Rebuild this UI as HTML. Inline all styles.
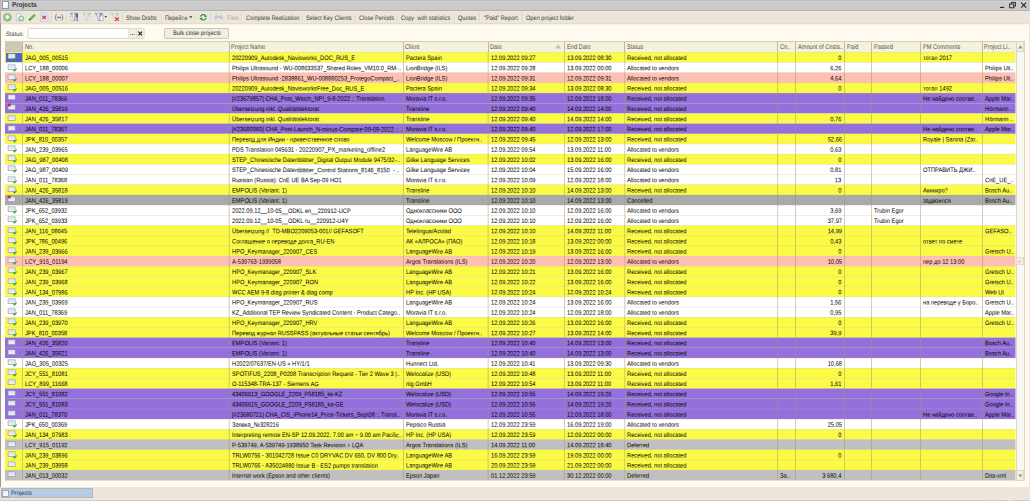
<!DOCTYPE html>
<html lang="en"><head><meta charset="utf-8"><title>Projects</title>
<style>
html,body{margin:0;padding:0;}
body{text-rendering:geometricPrecision;width:1030px;height:501px;overflow:hidden;background:#fffbf0;position:relative;font-family:"Liberation Sans",sans-serif;font-size:6.4px;color:#000;-webkit-text-stroke:0;}
.abs{position:absolute;}
svg{overflow:visible;}
.t{position:absolute;white-space:nowrap;line-height:1;transform:scaleX(.9) rotate(0.03deg);transform-origin:0 0;}
.row{position:absolute;left:5px;width:1010.5px;height:12px;}/*10.19*/
.c{position:absolute;top:0;height:100%;overflow:hidden;white-space:pre;}/*rgba(160,148,108,0.6)*/
.c span{position:absolute;left:2.9px;top:0;line-height:1;transform-origin:0 0;}
.c.r span{left:auto;right:2.6px;transform-origin:100% 0;}
/*rgba(190,180,150,0.4)*/
.tb{position:absolute;top:15.5px;white-space:pre;line-height:1;color:#3a3a3a;-webkit-text-stroke:0;transform:scaleX(.88) rotate(0.03deg);transform-origin:0 0;}
.sep{position:absolute;top:13.2px;width:0.6px;height:8.6px;background:#ded8cb;box-shadow:0.6px 0 0 #f1eee7;}
</style></head><body>

<div class="abs" style="left:0;top:0;width:1030px;height:11px;background:#cccccc;"></div>
<svg class="abs" style="left:0;top:0;" width="1030" height="11" viewBox="0 0 1030 11"><rect x="0" y="0" width="1030" height="0.8" fill="#b0b0b0"/><rect x="0" y="0.8" width="1030" height="0.8" fill="#d6d6d6"/><rect x="0" y="9.9" width="1030" height="0.9" fill="#a4a4a4"/><rect x="0" y="10.8" width="1030" height="0.2" fill="#d8d4cc"/><rect x="0" y="0" width="1.2" height="11" fill="#b8b8b8"/><rect x="1028.6" y="0" width="0.7" height="11" fill="#b0b0b0"/><rect x="1029.3" y="0" width="0.7" height="11" fill="#d8d8d8"/></svg>
<div class="abs" style="left:2.4px;top:1.2px;width:6.2px;height:7.4px;background:linear-gradient(135deg,#fff 40%,#dfe6f0);border:0.6px solid #8f98a8;box-sizing:border-box;"></div>
<div class="t" style="left:12.4px;top:2.2px;font-weight:bold;font-size:7px;color:#34343c;-webkit-text-stroke:0;">Projects</div>
<svg class="abs" style="left:998px;top:0;" width="32" height="11" viewBox="0 0 32 11"><g stroke="#222" stroke-width="0.9" fill="none"><path d="M2 7.4h4.2" stroke-width="1.1"/><rect x="11.6" y="4" width="4.2" height="3.8"/><path d="M13.2 4v-1.6h4.3v3.8h-1.7"/><path d="M23.2 2.6l5 5M28.2 2.6l-5 5" stroke-width="1.1"/></g></svg>
<div class="abs" style="left:1.3px;top:11px;width:1027.3px;height:12px;background:#ebe5da;"></div>
<div class="abs" style="left:1.3px;top:23px;width:1027.3px;height:1px;background:#e3ddce;"></div>
<div class="abs" style="left:1.3px;top:24px;width:1027.3px;height:1px;background:#f8f3e7;"></div>
<div class="abs" style="left:0;top:11px;width:1.3px;height:12.4px;background:#b4b4b4;"></div>
<div class="abs" style="left:0;top:23.4px;width:1.3px;height:463.6px;background:#989898;"></div>
<div class="abs" style="left:1028.7px;top:11px;width:1.3px;height:476px;background:#e8e7e3;"></div>
<svg class="abs" style="left:0;top:0;" width="260" height="24" viewBox="0 0 260 24"><defs><radialGradient id="gg" cx="50%" cy="40%" r="60%"><stop offset="0" stop-color="#c4e8ba"/><stop offset="0.7" stop-color="#86c878"/><stop offset="1" stop-color="#6fb463"/></radialGradient><linearGradient id="fg" x1="0" y1="0" x2="1" y2="0"><stop offset="0" stop-color="#7b8490"/><stop offset="0.42" stop-color="#eef1f5"/><stop offset="0.6" stop-color="#a8b0bc"/><stop offset="1" stop-color="#6f7884"/></linearGradient><linearGradient id="ff" x1="0" y1="0" x2="1" y2="0"><stop offset="0" stop-color="#b2b6bc"/><stop offset="0.45" stop-color="#ececee"/><stop offset="1" stop-color="#a8acb2"/></linearGradient></defs><circle cx="7.45" cy="17.3" r="4" fill="url(#gg)" stroke="#a3ada0" stroke-width="0.8"/><path d="M5.4 17.3h4.1M7.45 15.3v4" stroke="#fff" stroke-width="1.05"/><path d="M16.3 13.5h3.6l1.5 1.5v5.8h-5.1z" fill="#dde8f6" stroke="#a9bbd6" stroke-width="0.5"/><path d="M17.4 14.2h1.6v2.6h-1.6z" fill="#fff"/><circle cx="21.3" cy="18.5" r="2.5" fill="url(#gg)" stroke="#8fb088" stroke-width="0.4"/><path d="M19.9 18.5h2.8M21.3 17.1v2.8" stroke="#fff" stroke-width="0.9"/><path d="M30 19.3l4.3-3.9" stroke="#3fb53a" stroke-width="2.4" stroke-linecap="round"/><path d="M30.6 18.5l3.6-3.3" stroke="#8be07e" stroke-width="0.7"/><path d="M28.9 20.5l0.5-1.6 1.2 1.2z" fill="#333"/><path d="M40.6 12.8h5.6l1.8 1.8v6.8h-7.4z" fill="#e4ebf5" stroke="#b4c2d8" stroke-width="0.6"/><path d="M42.3 15.7l3.8 3.4M46.1 15.7l-3.8 3.4" stroke="#d93636" stroke-width="1.15"/>
<g stroke="#6b7385" stroke-width="0.8" fill="none"><path d="M56.6 14.2c-1.6 1.8-1.6 4.6 0 6.4M61.6 14.2c1.6 1.8 1.6 4.6 0 6.4"/><path d="M57.2 17.4h3.8" stroke-width="0.9"/></g><path d="M56.8 17.4l1.5-1.2v2.4zM61.4 17.4l-1.5-1.2v2.4z" fill="#6b7385"/>
<rect x="70.6" y="16.6" width="6" height="4" fill="#e8f0fa" stroke="#9fb6d6" stroke-width="0.4"/><path d="M70.2 13h7.8l-2.9 4.4v3.2h-2v-3.2z" fill="url(#fg)" stroke="#8791a0" stroke-width="0.4"/><path d="M77.2 14v4.4M77.2 19.6v1.2" stroke="#1f2f55" stroke-width="1.1"/>
<rect x="86" y="16" width="4.8" height="4.6" fill="#e6e7ea" stroke="#cfd1d6" stroke-width="0.4"/><path d="M83 13h7.8l-2.9 4.4v3.2h-2v-3.2z" fill="url(#ff)" stroke="#c4c7cc" stroke-width="0.4"/>
<rect x="99.4" y="15" width="3.6" height="5.6" fill="#fff" stroke="#6d97d0" stroke-width="0.6"/><path d="M95 13h7.8l-2.9 4.4v3.2h-2v-3.2z" fill="url(#fg)" stroke="#8791a0" stroke-width="0.4"/><path d="M104.4 16h2.8l-1.4 1.8z" fill="#5a4a14"/>
<path d="M111 13h7.8l-2.9 4.4v3.2h-2v-3.2z" fill="url(#ff)" stroke="#c4c7cc" stroke-width="0.4"/><path d="M115.1 17.5l3.7 3.4M118.8 17.5l-3.7 3.4" stroke="#d93a3a" stroke-width="1.1"/>
<g fill="none" stroke="#2f9236" stroke-width="1.15"><path d="M200.5 16.7a2.9 2.9 0 0 1 5.3-.7"/><path d="M206.1 17.9a2.9 2.9 0 0 1-5.3.7"/></g><path d="M204.7 14.5l2.5 1.9-2.9.9z M201.9 20.1l-2.5-1.9 2.9-.9z" fill="#2f9236"/>
<g><rect x="214.6" y="15.6" width="8" height="4" rx="1" fill="#c6cad4" stroke="#b6bac6" stroke-width="0.4"/><rect x="216.4" y="13.2" width="4.4" height="2.6" fill="#e9ebf0" stroke="#c2c6d0" stroke-width="0.35"/><rect x="216.4" y="18.2" width="4.4" height="2.4" fill="#f2f1ee" stroke="#c4c4c8" stroke-width="0.35"/></g>
</svg>
<div class="sep" style="left:50.8px"></div>
<div class="sep" style="left:66.2px"></div>
<div class="sep" style="left:121.9px"></div>
<div class="sep" style="left:160.8px"></div>
<div class="sep" style="left:195.2px"></div>
<div class="sep" style="left:210.0px"></div>
<div class="sep" style="left:241.0px"></div>
<div class="sep" style="left:301.9px"></div>
<div class="sep" style="left:354.6px"></div>
<div class="sep" style="left:397.0px"></div>
<div class="sep" style="left:453.5px"></div>
<div class="sep" style="left:479.0px"></div>
<div class="sep" style="left:521.7px"></div>
<div class="tb" style="left:126.2px;">Show Drafts</div>
<div class="tb" style="left:165px;">Перейти</div>
<div class="tb" style="left:226.8px;color:#b2ab9c;">Files</div>
<div class="tb" style="left:245.6px;">Complete Realization</div>
<div class="tb" style="left:306.2px;">Select Key Clients</div>
<div class="tb" style="left:358.6px;">Close Periods</div>
<div class="tb" style="left:400.6px;">Copy  with statistics</div>
<div class="tb" style="left:458.4px;">Quotes</div>
<div class="tb" style="left:484px;">"Paid" Report</div>
<div class="tb" style="left:525.9px;">Open project folder</div>
<svg class="abs" style="left:189.3px;top:15.8px;" width="4" height="3" viewBox="0 0 4 3"><path d="M0.2 0.3h3.2l-1.6 1.9z" fill="#4a3c14"/></svg>
<div class="t" style="left:5.7px;top:31.7px;color:#444;-webkit-text-stroke:0;">Status:</div>
<svg class="abs" style="left:0;top:0;" width="150" height="42" viewBox="0 0 150 42"><rect x="28.1" y="28.4" width="116" height="10" rx="0.9" fill="#fff" stroke="#cbc6b0" stroke-width="0.7"/><rect x="128.6" y="28.8" width="15.2" height="9.2" fill="#f0ede1"/><rect x="128.3" y="28.8" width="0.6" height="9.2" fill="#dad5c2"/><rect x="136.2" y="28.8" width="0.6" height="9.2" fill="#dad5c2"/><g fill="#4a4a4a"><rect x="130.4" y="34.1" width="0.9" height="0.9"/><rect x="132.1" y="34.1" width="0.9" height="0.9"/><rect x="133.8" y="34.1" width="0.9" height="0.9"/></g><path d="M138.4 31.6l3.7 3.8M142.1 31.6l-3.7 3.8" stroke="#222" stroke-width="1.15"/></svg>
<div class="abs" style="left:164.4px;top:28.4px;width:64.4px;height:10.2px;box-sizing:border-box;background:#f1eee4;border:0.6px solid #cbc6b4;border-radius:1.2px;"></div>
<div class="t" style="left:172.8px;top:31.1px;color:#333;-webkit-text-stroke:0;">Bulk close projects</div>
<div class="abs" style="left:4.6px;top:40.8px;width:1020.4px;height:440.4px;box-sizing:border-box;border:0.6px solid #b9b296;border-top-color:#cfc9b0;border-right-color:#ddd6c0;border-bottom:0.9px solid #fff;background:#fff;"></div>
<div class="abs" style="left:5px;top:41.2px;width:1010.5px;height:11px;background:#f4f1dc;"></div>
<div class="abs" style="left:5px;top:41.2px;width:17.3px;height:11px;background:#cdc9b3;"></div>
<div class="abs" style="left:22.1px;top:41.6px;width:0.6px;height:10.4px;background:#c2ba9e;"></div>
<div class="t" style="left:24.5px;top:44.5px;font-size:6.8px;color:#575046;-webkit-text-stroke:0;width:246.14px;transform:scaleX(.83) rotate(0.03deg);">No.</div>
<div class="abs" style="left:228.8px;top:41.6px;width:0.6px;height:10.4px;background:#c2ba9e;"></div>
<div class="t" style="left:231.2px;top:44.5px;font-size:6.8px;color:#575046;-webkit-text-stroke:0;width:206.99px;transform:scaleX(.83) rotate(0.03deg);">Project Name</div>
<div class="abs" style="left:403.0px;top:41.6px;width:0.6px;height:10.4px;background:#c2ba9e;"></div>
<div class="t" style="left:405.4px;top:44.5px;font-size:6.8px;color:#575046;-webkit-text-stroke:0;width:99.16px;transform:scaleX(.83) rotate(0.03deg);">Client</div>
<div class="abs" style="left:487.7px;top:41.6px;width:0.6px;height:10.4px;background:#c2ba9e;"></div>
<div class="t" style="left:490.1px;top:44.5px;font-size:6.8px;color:#575046;-webkit-text-stroke:0;width:89.28px;transform:scaleX(.83) rotate(0.03deg);">Date</div>
<div class="abs" style="left:564.2px;top:41.6px;width:0.6px;height:10.4px;background:#c2ba9e;"></div>
<div class="t" style="left:566.6px;top:44.5px;font-size:6.8px;color:#575046;-webkit-text-stroke:0;width:69.64px;transform:scaleX(.83) rotate(0.03deg);">End Date</div>
<div class="abs" style="left:624.4px;top:41.6px;width:0.6px;height:10.4px;background:#c2ba9e;"></div>
<div class="t" style="left:626.8px;top:44.5px;font-size:6.8px;color:#575046;-webkit-text-stroke:0;width:181.33px;transform:scaleX(.83) rotate(0.03deg);">Status</div>
<div class="abs" style="left:777.3px;top:41.6px;width:0.6px;height:10.4px;background:#c2ba9e;"></div>
<div class="t" style="left:779.7px;top:44.5px;font-size:6.8px;color:#575046;-webkit-text-stroke:0;width:18.55px;transform:scaleX(.83) rotate(0.03deg);">Co..</div>
<div class="abs" style="left:795.1px;top:41.6px;width:0.6px;height:10.4px;background:#c2ba9e;"></div>
<div class="t" style="left:797.5px;top:44.5px;font-size:6.8px;color:#575046;-webkit-text-stroke:0;width:56.14px;transform:scaleX(.83) rotate(0.03deg);">Amount of Costs..</div>
<div class="abs" style="left:844.1px;top:41.6px;width:0.6px;height:10.4px;background:#c2ba9e;"></div>
<div class="t" style="left:846.5px;top:44.5px;font-size:6.8px;color:#575046;-webkit-text-stroke:0;width:29.64px;transform:scaleX(.83) rotate(0.03deg);">Paid</div>
<div class="abs" style="left:871.1px;top:41.6px;width:0.6px;height:10.4px;background:#c2ba9e;"></div>
<div class="t" style="left:873.5px;top:44.5px;font-size:6.8px;color:#575046;-webkit-text-stroke:0;width:56.14px;transform:scaleX(.83) rotate(0.03deg);">Passed</div>
<div class="abs" style="left:920.1px;top:41.6px;width:0.6px;height:10.4px;background:#c2ba9e;"></div>
<div class="t" style="left:922.5px;top:44.5px;font-size:6.8px;color:#575046;-webkit-text-stroke:0;width:71.69px;transform:scaleX(.83) rotate(0.03deg);">PM Comments</div>
<div class="abs" style="left:982.0px;top:41.6px;width:0.6px;height:10.4px;background:#c2ba9e;"></div>
<div class="t" style="left:984.4px;top:44.5px;font-size:6.8px;color:#575046;-webkit-text-stroke:0;width:37.47px;transform:scaleX(.83) rotate(0.03deg);">Project Li..</div>
<div class="abs" style="left:4.6px;top:40.6px;width:1020px;height:0.6px;background:#d3cdb5;"></div>
<svg class="abs" style="left:554.6px;top:44.4px;" width="6" height="5" viewBox="0 0 6 5"><path d="M3 0.4l2.6 3.8H0.4z" fill="#cfc69a" stroke="#bdb384" stroke-width="0.3"/></svg>
<div class="abs" style="left:1015.8px;top:41.2px;width:8.6px;height:439.4px;background:#f8f7f2;border-left:0.6px solid #ddd8c6;box-sizing:border-box;"></div>
<div class="abs" style="left:1015.8px;top:41.2px;width:8.6px;height:10.6px;background:#f3f0e3;border:0.6px solid #dcd7c2;box-sizing:border-box;"></div>
<svg class="abs" style="left:1018px;top:44.6px;" width="5" height="4" viewBox="0 0 5 4"><path d="M2.4 0.3l2 3.2H0.4z" fill="#8c8c8c"/></svg>
<div class="abs" style="left:1015.8px;top:470.4px;width:8.6px;height:10.2px;background:#f3f0e3;border:0.6px solid #dcd7c2;box-sizing:border-box;"></div>
<svg class="abs" style="left:1018px;top:473.6px;" width="5" height="4" viewBox="0 0 5 4"><path d="M2.4 3.6l2-3.2H0.4z" fill="#8c8c8c"/></svg>
<div class="abs" style="left:1015.8px;top:257.3px;width:8.6px;height:7.8px;background:#f1efdf;border:0.5px solid #dfdac6;box-sizing:border-box;"></div>
<svg class="abs" style="left:1018.4px;top:259.6px;" width="4" height="4" viewBox="0 0 4 4"><path d="M0.8 3.2V1.2h2" stroke="#a9a9a0" stroke-width="0.7" fill="none"/></svg>
<svg class="abs" style="left:0;top:0;" width="1030" height="501" viewBox="0 0 1030 501" shape-rendering="auto"><rect x="5.0" y="52.3" width="1010.5" height="10.21" fill="#fbfb46"/><rect x="5.0" y="62.49" width="1010.5" height="10.21" fill="#ffffff"/><rect x="5.0" y="72.68" width="1010.5" height="10.21" fill="#ffc0b4"/><rect x="5.0" y="82.87" width="1010.5" height="10.21" fill="#fbfb46"/><rect x="5.0" y="93.06" width="1010.5" height="10.21" fill="#9370db"/><rect x="5.0" y="103.25" width="1010.5" height="10.21" fill="#9370db"/><rect x="5.0" y="113.44" width="1010.5" height="10.21" fill="#fbfb46"/><rect x="5.0" y="123.63" width="1010.5" height="10.21" fill="#9370db"/><rect x="5.0" y="133.82" width="1010.5" height="10.21" fill="#fbfb46"/><rect x="5.0" y="144.01" width="1010.5" height="10.21" fill="#ffffff"/><rect x="5.0" y="154.2" width="1010.5" height="10.21" fill="#fbfb46"/><rect x="5.0" y="164.39" width="1010.5" height="10.21" fill="#ffffff"/><rect x="5.0" y="174.58" width="1010.5" height="10.21" fill="#ffffff"/><rect x="5.0" y="184.77" width="1010.5" height="10.21" fill="#fbfb46"/><rect x="5.0" y="194.96" width="1010.5" height="10.21" fill="#a9a9a9"/><rect x="5.0" y="205.15" width="1010.5" height="10.21" fill="#ffffff"/><rect x="5.0" y="215.34" width="1010.5" height="10.21" fill="#ffffff"/><rect x="5.0" y="225.53" width="1010.5" height="10.21" fill="#fbfb46"/><rect x="5.0" y="235.72" width="1010.5" height="10.21" fill="#fbfb46"/><rect x="5.0" y="245.91" width="1010.5" height="10.21" fill="#fbfb46"/><rect x="5.0" y="256.1" width="1010.5" height="10.21" fill="#ffc0b4"/><rect x="5.0" y="266.29" width="1010.5" height="10.21" fill="#fbfb46"/><rect x="5.0" y="276.48" width="1010.5" height="10.21" fill="#fbfb46"/><rect x="5.0" y="286.67" width="1010.5" height="10.21" fill="#fbfb46"/><rect x="5.0" y="296.86" width="1010.5" height="10.21" fill="#ffffff"/><rect x="5.0" y="307.05" width="1010.5" height="10.21" fill="#ffffff"/><rect x="5.0" y="317.24" width="1010.5" height="10.21" fill="#fbfb46"/><rect x="5.0" y="327.43" width="1010.5" height="10.21" fill="#fbfb46"/><rect x="5.0" y="337.62" width="1010.5" height="10.21" fill="#9370db"/><rect x="5.0" y="347.81" width="1010.5" height="10.21" fill="#9370db"/><rect x="5.0" y="358.0" width="1010.5" height="10.21" fill="#ffffff"/><rect x="5.0" y="368.19" width="1010.5" height="10.21" fill="#fbfb46"/><rect x="5.0" y="378.38" width="1010.5" height="10.21" fill="#fbfb46"/><rect x="5.0" y="388.57" width="1010.5" height="10.21" fill="#9370db"/><rect x="5.0" y="398.76" width="1010.5" height="10.21" fill="#9370db"/><rect x="5.0" y="408.95" width="1010.5" height="10.21" fill="#9370db"/><rect x="5.0" y="419.14" width="1010.5" height="10.21" fill="#ffffff"/><rect x="5.0" y="429.33" width="1010.5" height="10.21" fill="#fbfb46"/><rect x="5.0" y="439.52" width="1010.5" height="10.21" fill="#c0c0c0"/><rect x="5.0" y="449.71" width="1010.5" height="10.21" fill="#fbfb46"/><rect x="5.0" y="459.9" width="1010.5" height="10.21" fill="#fbfb46"/><rect x="5.0" y="470.09" width="1010.5" height="10.21" fill="#c0c0c0"/><rect x="5.9" y="53.0" width="16.2" height="9.09" fill="#4d66c3"/><rect x="22.1" y="52.3" width="0.8" height="427.98" fill="rgba(160,148,108,0.6)"/><rect x="228.8" y="52.3" width="0.8" height="427.98" fill="rgba(160,148,108,0.6)"/><rect x="403.0" y="52.3" width="0.8" height="427.98" fill="rgba(160,148,108,0.6)"/><rect x="487.7" y="52.3" width="0.8" height="427.98" fill="rgba(160,148,108,0.6)"/><rect x="564.2" y="52.3" width="0.8" height="427.98" fill="rgba(160,148,108,0.6)"/><rect x="624.4" y="52.3" width="0.8" height="427.98" fill="rgba(160,148,108,0.6)"/><rect x="777.3" y="52.3" width="0.8" height="427.98" fill="rgba(160,148,108,0.6)"/><rect x="795.1" y="52.3" width="0.8" height="427.98" fill="rgba(160,148,108,0.6)"/><rect x="844.1" y="52.3" width="0.8" height="427.98" fill="rgba(160,148,108,0.6)"/><rect x="871.1" y="52.3" width="0.8" height="427.98" fill="rgba(160,148,108,0.6)"/><rect x="920.1" y="52.3" width="0.8" height="427.98" fill="rgba(160,148,108,0.6)"/><rect x="982.0" y="52.3" width="0.8" height="427.98" fill="rgba(160,148,108,0.6)"/><rect x="5.0" y="52.0" width="1010.5" height="0.6" fill="rgba(190,180,150,0.4)"/><rect x="5.0" y="62.19" width="1010.5" height="0.6" fill="rgba(190,180,150,0.4)"/><rect x="5.0" y="72.38" width="1010.5" height="0.6" fill="rgba(190,180,150,0.4)"/><rect x="5.0" y="82.57" width="1010.5" height="0.6" fill="rgba(190,180,150,0.4)"/><rect x="5.0" y="92.76" width="1010.5" height="0.6" fill="rgba(190,180,150,0.4)"/><rect x="5.0" y="102.95" width="1010.5" height="0.6" fill="rgba(190,180,150,0.4)"/><rect x="5.0" y="113.14" width="1010.5" height="0.6" fill="rgba(190,180,150,0.4)"/><rect x="5.0" y="123.33" width="1010.5" height="0.6" fill="rgba(190,180,150,0.4)"/><rect x="5.0" y="133.52" width="1010.5" height="0.6" fill="rgba(190,180,150,0.4)"/><rect x="5.0" y="143.71" width="1010.5" height="0.6" fill="rgba(190,180,150,0.4)"/><rect x="5.0" y="153.9" width="1010.5" height="0.6" fill="rgba(190,180,150,0.4)"/><rect x="5.0" y="164.09" width="1010.5" height="0.6" fill="rgba(190,180,150,0.4)"/><rect x="5.0" y="174.28" width="1010.5" height="0.6" fill="rgba(190,180,150,0.4)"/><rect x="5.0" y="184.47" width="1010.5" height="0.6" fill="rgba(190,180,150,0.4)"/><rect x="5.0" y="194.66" width="1010.5" height="0.6" fill="rgba(190,180,150,0.4)"/><rect x="5.0" y="204.85" width="1010.5" height="0.6" fill="rgba(190,180,150,0.4)"/><rect x="5.0" y="215.04" width="1010.5" height="0.6" fill="rgba(190,180,150,0.4)"/><rect x="5.0" y="225.23" width="1010.5" height="0.6" fill="rgba(190,180,150,0.4)"/><rect x="5.0" y="235.42" width="1010.5" height="0.6" fill="rgba(190,180,150,0.4)"/><rect x="5.0" y="245.61" width="1010.5" height="0.6" fill="rgba(190,180,150,0.4)"/><rect x="5.0" y="255.8" width="1010.5" height="0.6" fill="rgba(190,180,150,0.4)"/><rect x="5.0" y="265.99" width="1010.5" height="0.6" fill="rgba(190,180,150,0.4)"/><rect x="5.0" y="276.18" width="1010.5" height="0.6" fill="rgba(190,180,150,0.4)"/><rect x="5.0" y="286.37" width="1010.5" height="0.6" fill="rgba(190,180,150,0.4)"/><rect x="5.0" y="296.56" width="1010.5" height="0.6" fill="rgba(190,180,150,0.4)"/><rect x="5.0" y="306.75" width="1010.5" height="0.6" fill="rgba(190,180,150,0.4)"/><rect x="5.0" y="316.94" width="1010.5" height="0.6" fill="rgba(190,180,150,0.4)"/><rect x="5.0" y="327.13" width="1010.5" height="0.6" fill="rgba(190,180,150,0.4)"/><rect x="5.0" y="337.32" width="1010.5" height="0.6" fill="rgba(190,180,150,0.4)"/><rect x="5.0" y="347.51" width="1010.5" height="0.6" fill="rgba(190,180,150,0.4)"/><rect x="5.0" y="357.7" width="1010.5" height="0.6" fill="rgba(190,180,150,0.4)"/><rect x="5.0" y="367.89" width="1010.5" height="0.6" fill="rgba(190,180,150,0.4)"/><rect x="5.0" y="378.08" width="1010.5" height="0.6" fill="rgba(190,180,150,0.4)"/><rect x="5.0" y="388.27" width="1010.5" height="0.6" fill="rgba(190,180,150,0.4)"/><rect x="5.0" y="398.46" width="1010.5" height="0.6" fill="rgba(190,180,150,0.4)"/><rect x="5.0" y="408.65" width="1010.5" height="0.6" fill="rgba(190,180,150,0.4)"/><rect x="5.0" y="418.84" width="1010.5" height="0.6" fill="rgba(190,180,150,0.4)"/><rect x="5.0" y="429.03" width="1010.5" height="0.6" fill="rgba(190,180,150,0.4)"/><rect x="5.0" y="439.22" width="1010.5" height="0.6" fill="rgba(190,180,150,0.4)"/><rect x="5.0" y="449.41" width="1010.5" height="0.6" fill="rgba(190,180,150,0.4)"/><rect x="5.0" y="459.6" width="1010.5" height="0.6" fill="rgba(190,180,150,0.4)"/><rect x="5.0" y="469.79" width="1010.5" height="0.6" fill="rgba(190,180,150,0.4)"/><rect x="5.0" y="479.98" width="1010.5" height="0.6" fill="rgba(190,180,150,0.4)"/></svg>
<div class="row" style="top:52px;"><div class="c" style="left:0;width:17.1px;"><div class="abs" style="left:0;top:0.3px;"><svg class="abs" style="left:2.4px;top:1.1px;" width="14" height="9" viewBox="0 0 14 9"><rect x="1.1" y="0.9" width="7" height="4.7" fill="#f6f7fa" stroke="#8f99ae" stroke-width="0.7"/><path d="M2.4 2.5h4.4M2.4 3.8h4.4" stroke="#c9cedb" stroke-width="0.5"/><path d="M6.3 5.5l1.3 1.4 2-2.4" stroke="#1fa82a" stroke-width="1.15" fill="none"/></svg></div></div><div class="c" style="left:17.1px;width:206.7px;"><span style="transform:translateY(4.0px) scaleX(.895) rotate(.03deg)">JAG_005_00515</span></div><div class="c" style="left:223.8px;width:174.2px;"><span style="transform:translateY(4.0px) scaleX(.895) rotate(.03deg)">20220909_Autodesk_Navisworks_DOC_RUS_E</span></div><div class="c" style="left:398.0px;width:84.7px;"><span style="transform:translateY(4.0px) scaleX(.895) rotate(.03deg)">Pactera Spain</span></div><div class="c" style="left:482.7px;width:76.5px;"><span style="transform:translateY(4.0px) scaleX(.895) rotate(.03deg)">12.09.2022 09:27</span></div><div class="c" style="left:559.2px;width:60.2px;"><span style="transform:translateY(4.0px) scaleX(.895) rotate(.03deg)">13.09.2022 08:30</span></div><div class="c" style="left:619.4px;width:152.9px;"><span style="transform:translateY(4.0px) scaleX(.895) rotate(.03deg)">Received, not allocated</span></div><div class="c r" style="left:790.1px;width:49.0px;"><span style="transform:translateY(4.0px) scaleX(.895) rotate(.03deg)">0</span></div><div class="c" style="left:915.1px;width:61.9px;"><span style="transform:translateY(4.0px) scaleX(.895) rotate(.03deg)">тотал 2017</span></div></div>
<div class="row" style="top:62px;"><div class="c" style="left:0;width:17.1px;"><div class="abs" style="left:0;top:0.49px;"><svg class="abs" style="left:2.4px;top:1.1px;" width="14" height="9" viewBox="0 0 14 9"><rect x="1.1" y="0.9" width="7" height="4.7" fill="#f6f7fa" stroke="#8f99ae" stroke-width="0.7"/><path d="M2.4 2.5h4.4M2.4 3.8h4.4" stroke="#c9cedb" stroke-width="0.5"/><path d="M6.3 5.5l1.3 1.4 2-2.4" stroke="#1fa82a" stroke-width="1.15" fill="none"/></svg></div></div><div class="c" style="left:17.1px;width:206.7px;"><span style="transform:translateY(4.19px) scaleX(.895) rotate(.03deg)">LCY_188_00006</span></div><div class="c" style="left:223.8px;width:174.2px;"><span style="transform:translateY(4.19px) scaleX(.895) rotate(.03deg)">Philips Ultrasound - WU-008633537_Shared Roles_VM10.0_RM-..</span></div><div class="c" style="left:398.0px;width:84.7px;"><span style="transform:translateY(4.19px) scaleX(.895) rotate(.03deg)">LionBridge (ILS)</span></div><div class="c" style="left:482.7px;width:76.5px;"><span style="transform:translateY(4.19px) scaleX(.895) rotate(.03deg)">12.09.2022 09:28</span></div><div class="c" style="left:559.2px;width:60.2px;"><span style="transform:translateY(4.19px) scaleX(.895) rotate(.03deg)">13.09.2022 00:00</span></div><div class="c" style="left:619.4px;width:152.9px;"><span style="transform:translateY(4.19px) scaleX(.895) rotate(.03deg)">Allocated to vendors</span></div><div class="c r" style="left:790.1px;width:49.0px;"><span style="transform:translateY(4.19px) scaleX(.895) rotate(.03deg)">6,26</span></div><div class="c" style="left:977.0px;width:33.5px;"><span style="transform:translateY(4.19px) scaleX(.895) rotate(.03deg)">Philips Ult..</span></div></div>
<div class="row" style="top:72px;"><div class="c" style="left:0;width:17.1px;"><div class="abs" style="left:0;top:0.68px;"><svg class="abs" style="left:2.4px;top:1.1px;" width="14" height="9" viewBox="0 0 14 9"><rect x="1.1" y="0.9" width="7" height="4.7" fill="#f6f7fa" stroke="#8f99ae" stroke-width="0.7"/><path d="M2.4 2.5h4.4M2.4 3.8h4.4" stroke="#c9cedb" stroke-width="0.5"/><path d="M6.3 5.5l1.3 1.4 2-2.4" stroke="#1fa82a" stroke-width="1.15" fill="none"/></svg></div></div><div class="c" style="left:17.1px;width:206.7px;"><span style="transform:translateY(4.38px) scaleX(.895) rotate(.03deg)">LCY_188_00007</span></div><div class="c" style="left:223.8px;width:174.2px;"><span style="transform:translateY(4.38px) scaleX(.895) rotate(.03deg)">Philips Ultrasound -2838861_WU-008880253_ProtegoCompact_..</span></div><div class="c" style="left:398.0px;width:84.7px;"><span style="transform:translateY(4.38px) scaleX(.895) rotate(.03deg)">LionBridge (ILS)</span></div><div class="c" style="left:482.7px;width:76.5px;"><span style="transform:translateY(4.38px) scaleX(.895) rotate(.03deg)">12.09.2022 09:31</span></div><div class="c" style="left:559.2px;width:60.2px;"><span style="transform:translateY(4.38px) scaleX(.895) rotate(.03deg)">12.09.2022 09:31</span></div><div class="c" style="left:619.4px;width:152.9px;"><span style="transform:translateY(4.38px) scaleX(.895) rotate(.03deg)">Allocated to vendors</span></div><div class="c r" style="left:790.1px;width:49.0px;"><span style="transform:translateY(4.38px) scaleX(.895) rotate(.03deg)">4,64</span></div><div class="c" style="left:977.0px;width:33.5px;"><span style="transform:translateY(4.38px) scaleX(.895) rotate(.03deg)">Philips Ult..</span></div></div>
<div class="row" style="top:82px;"><div class="c" style="left:0;width:17.1px;"><div class="abs" style="left:0;top:0.87px;"><svg class="abs" style="left:2.4px;top:1.1px;" width="14" height="9" viewBox="0 0 14 9"><rect x="1.1" y="0.9" width="7" height="4.7" fill="#f6f7fa" stroke="#8f99ae" stroke-width="0.7"/><path d="M2.4 2.5h4.4M2.4 3.8h4.4" stroke="#c9cedb" stroke-width="0.5"/><path d="M6.3 5.5l1.3 1.4 2-2.4" stroke="#1fa82a" stroke-width="1.15" fill="none"/></svg></div></div><div class="c" style="left:17.1px;width:206.7px;"><span style="transform:translateY(4.57px) scaleX(.895) rotate(.03deg)">JAG_005_00516</span></div><div class="c" style="left:223.8px;width:174.2px;"><span style="transform:translateY(4.57px) scaleX(.895) rotate(.03deg)">20220909_Autodesk_NavisworksFree_Doc_RUS_E</span></div><div class="c" style="left:398.0px;width:84.7px;"><span style="transform:translateY(4.57px) scaleX(.895) rotate(.03deg)">Pactera Spain</span></div><div class="c" style="left:482.7px;width:76.5px;"><span style="transform:translateY(4.57px) scaleX(.895) rotate(.03deg)">12.09.2022 09:34</span></div><div class="c" style="left:559.2px;width:60.2px;"><span style="transform:translateY(4.57px) scaleX(.895) rotate(.03deg)">13.09.2022 08:30</span></div><div class="c" style="left:619.4px;width:152.9px;"><span style="transform:translateY(4.57px) scaleX(.895) rotate(.03deg)">Received, not allocated</span></div><div class="c r" style="left:790.1px;width:49.0px;"><span style="transform:translateY(4.57px) scaleX(.895) rotate(.03deg)">0</span></div><div class="c" style="left:915.1px;width:61.9px;"><span style="transform:translateY(4.57px) scaleX(.895) rotate(.03deg)">тотал 1492</span></div></div>
<div class="row" style="top:93px;"><div class="c" style="left:0;width:17.1px;"><div class="abs" style="left:0;top:0.06px;"><svg class="abs" style="left:2.4px;top:1.1px;" width="14" height="9" viewBox="0 0 14 9"><rect x="1.1" y="0.9" width="7" height="4.7" fill="#f6f7fa" stroke="#8f99ae" stroke-width="0.7"/><path d="M2.4 2.5h4.4M2.4 3.8h4.4" stroke="#c9cedb" stroke-width="0.5"/></svg></div></div><div class="c" style="left:17.1px;width:206.7px;"><span style="transform:translateY(3.76px) scaleX(.895) rotate(.03deg)">JAN_011_78366</span></div><div class="c" style="left:223.8px;width:174.2px;"><span style="transform:translateY(3.76px) scaleX(.895) rotate(.03deg)">[#23679857] CHA_Post_Watch_NPI_9-8-2022 :: Translation</span></div><div class="c" style="left:398.0px;width:84.7px;"><span style="transform:translateY(3.76px) scaleX(.895) rotate(.03deg)">Moravia IT s.r.o.</span></div><div class="c" style="left:482.7px;width:76.5px;"><span style="transform:translateY(3.76px) scaleX(.895) rotate(.03deg)">12.09.2022 09:35</span></div><div class="c" style="left:559.2px;width:60.2px;"><span style="transform:translateY(3.76px) scaleX(.895) rotate(.03deg)">12.09.2022 18:00</span></div><div class="c" style="left:619.4px;width:152.9px;"><span style="transform:translateY(3.76px) scaleX(.895) rotate(.03deg)">Received, not allocated</span></div><div class="c" style="left:915.1px;width:61.9px;"><span style="transform:translateY(3.76px) scaleX(.895) rotate(.03deg)">Не найдено соотве..</span></div><div class="c" style="left:977.0px;width:33.5px;"><span style="transform:translateY(3.76px) scaleX(.895) rotate(.03deg)">Apple Mar..</span></div></div>
<div class="row" style="top:103px;"><div class="c" style="left:0;width:17.1px;"><div class="abs" style="left:0;top:0.25px;"><svg class="abs" style="left:2.4px;top:1.1px;" width="14" height="9" viewBox="0 0 14 9"><rect x="1.1" y="0.9" width="7" height="4.7" fill="#f6f7fa" stroke="#8f99ae" stroke-width="0.7"/><path d="M2.4 2.5h4.4M2.4 3.8h4.4" stroke="#c9cedb" stroke-width="0.5"/><path d="M0.9 -0.4l2.8 2.8M3.7 -0.4l-2.8 2.8" stroke="#e01818" stroke-width="1.05"/></svg></div></div><div class="c" style="left:17.1px;width:206.7px;"><span style="transform:translateY(3.95px) scaleX(.895) rotate(.03deg)">JAN_426_35816</span></div><div class="c" style="left:223.8px;width:174.2px;"><span style="transform:translateY(3.95px) scaleX(.895) rotate(.03deg)">Übersetzung inkl. Qualitätslektorat</span></div><div class="c" style="left:398.0px;width:84.7px;"><span style="transform:translateY(3.95px) scaleX(.895) rotate(.03deg)">Transline</span></div><div class="c" style="left:482.7px;width:76.5px;"><span style="transform:translateY(3.95px) scaleX(.895) rotate(.03deg)">12.09.2022 09:40</span></div><div class="c" style="left:559.2px;width:60.2px;"><span style="transform:translateY(3.95px) scaleX(.895) rotate(.03deg)">14.09.2022 14:00</span></div><div class="c" style="left:619.4px;width:152.9px;"><span style="transform:translateY(3.95px) scaleX(.895) rotate(.03deg)">Received, not allocated</span></div><div class="c" style="left:977.0px;width:33.5px;"><span style="transform:translateY(3.95px) scaleX(.895) rotate(.03deg)">Hörmann ..</span></div></div>
<div class="row" style="top:113px;"><div class="c" style="left:0;width:17.1px;"><div class="abs" style="left:0;top:0.44px;"><svg class="abs" style="left:2.4px;top:1.1px;" width="14" height="9" viewBox="0 0 14 9"><rect x="1.1" y="0.9" width="7" height="4.7" fill="#f6f7fa" stroke="#8f99ae" stroke-width="0.7"/><path d="M2.4 2.5h4.4M2.4 3.8h4.4" stroke="#c9cedb" stroke-width="0.5"/></svg></div></div><div class="c" style="left:17.1px;width:206.7px;"><span style="transform:translateY(4.14px) scaleX(.895) rotate(.03deg)">JAN_426_35817</span></div><div class="c" style="left:223.8px;width:174.2px;"><span style="transform:translateY(4.14px) scaleX(.895) rotate(.03deg)">Übersetzung inkl. Qualitätslektorat</span></div><div class="c" style="left:398.0px;width:84.7px;"><span style="transform:translateY(4.14px) scaleX(.895) rotate(.03deg)">Transline</span></div><div class="c" style="left:482.7px;width:76.5px;"><span style="transform:translateY(4.14px) scaleX(.895) rotate(.03deg)">12.09.2022 09:40</span></div><div class="c" style="left:559.2px;width:60.2px;"><span style="transform:translateY(4.14px) scaleX(.895) rotate(.03deg)">14.09.2022 14:00</span></div><div class="c" style="left:619.4px;width:152.9px;"><span style="transform:translateY(4.14px) scaleX(.895) rotate(.03deg)">Received, not allocated</span></div><div class="c r" style="left:790.1px;width:49.0px;"><span style="transform:translateY(4.14px) scaleX(.895) rotate(.03deg)">0,76</span></div><div class="c" style="left:977.0px;width:33.5px;"><span style="transform:translateY(4.14px) scaleX(.895) rotate(.03deg)">Hörmann ..</span></div></div>
<div class="row" style="top:123px;"><div class="c" style="left:0;width:17.1px;"><div class="abs" style="left:0;top:0.63px;"><svg class="abs" style="left:2.4px;top:1.1px;" width="14" height="9" viewBox="0 0 14 9"><rect x="1.1" y="0.9" width="7" height="4.7" fill="#f6f7fa" stroke="#8f99ae" stroke-width="0.7"/><path d="M2.4 2.5h4.4M2.4 3.8h4.4" stroke="#c9cedb" stroke-width="0.5"/></svg></div></div><div class="c" style="left:17.1px;width:206.7px;"><span style="transform:translateY(4.33px) scaleX(.895) rotate(.03deg)">JAN_011_78367</span></div><div class="c" style="left:223.8px;width:174.2px;"><span style="transform:translateY(4.33px) scaleX(.895) rotate(.03deg)">[#23680060] CHA_Post-Launch_N-minus-Compare-09-08-2022 :: ..</span></div><div class="c" style="left:398.0px;width:84.7px;"><span style="transform:translateY(4.33px) scaleX(.895) rotate(.03deg)">Moravia IT s.r.o.</span></div><div class="c" style="left:482.7px;width:76.5px;"><span style="transform:translateY(4.33px) scaleX(.895) rotate(.03deg)">12.09.2022 09:40</span></div><div class="c" style="left:559.2px;width:60.2px;"><span style="transform:translateY(4.33px) scaleX(.895) rotate(.03deg)">12.09.2022 17:00</span></div><div class="c" style="left:619.4px;width:152.9px;"><span style="transform:translateY(4.33px) scaleX(.895) rotate(.03deg)">Received, not allocated</span></div><div class="c" style="left:915.1px;width:61.9px;"><span style="transform:translateY(4.33px) scaleX(.895) rotate(.03deg)">Не найдено соотве..</span></div><div class="c" style="left:977.0px;width:33.5px;"><span style="transform:translateY(4.33px) scaleX(.895) rotate(.03deg)">Apple Mar..</span></div></div>
<div class="row" style="top:133px;"><div class="c" style="left:0;width:17.1px;"><div class="abs" style="left:0;top:0.82px;"><svg class="abs" style="left:2.4px;top:1.1px;" width="14" height="9" viewBox="0 0 14 9"><rect x="1.1" y="0.9" width="7" height="4.7" fill="#f6f7fa" stroke="#8f99ae" stroke-width="0.7"/><path d="M2.4 2.5h4.4M2.4 3.8h4.4" stroke="#c9cedb" stroke-width="0.5"/><path d="M6.3 5.5l1.3 1.4 2-2.4" stroke="#1fa82a" stroke-width="1.15" fill="none"/></svg></div></div><div class="c" style="left:17.1px;width:206.7px;"><span style="transform:translateY(4.52px) scaleX(.895) rotate(.03deg)">JPK_810_00357</span></div><div class="c" style="left:223.8px;width:174.2px;"><span style="transform:translateY(4.52px) scaleX(.895) rotate(.03deg)">Перевод для Индии - приветственное слово</span></div><div class="c" style="left:398.0px;width:84.7px;"><span style="transform:translateY(4.52px) scaleX(.895) rotate(.03deg)">Welcome Moscow / Проектн..</span></div><div class="c" style="left:482.7px;width:76.5px;"><span style="transform:translateY(4.52px) scaleX(.895) rotate(.03deg)">12.09.2022 09:45</span></div><div class="c" style="left:559.2px;width:60.2px;"><span style="transform:translateY(4.52px) scaleX(.895) rotate(.03deg)">12.09.2022 13:00</span></div><div class="c" style="left:619.4px;width:152.9px;"><span style="transform:translateY(4.52px) scaleX(.895) rotate(.03deg)">Received, not allocated</span></div><div class="c r" style="left:790.1px;width:49.0px;"><span style="transform:translateY(4.52px) scaleX(.895) rotate(.03deg)">52,66</span></div><div class="c" style="left:915.1px;width:61.9px;"><span style="transform:translateY(4.52px) scaleX(.895) rotate(.03deg)">Royale | Sanina (Zar..</span></div></div>
<div class="row" style="top:144px;"><div class="c" style="left:0;width:17.1px;"><div class="abs" style="left:0;top:0.01px;"><svg class="abs" style="left:2.4px;top:1.1px;" width="14" height="9" viewBox="0 0 14 9"><rect x="1.1" y="0.9" width="7" height="4.7" fill="#f6f7fa" stroke="#8f99ae" stroke-width="0.7"/><path d="M2.4 2.5h4.4M2.4 3.8h4.4" stroke="#c9cedb" stroke-width="0.5"/><path d="M6.3 5.5l1.3 1.4 2-2.4" stroke="#1fa82a" stroke-width="1.15" fill="none"/></svg></div></div><div class="c" style="left:17.1px;width:206.7px;"><span style="transform:translateY(3.71px) scaleX(.895) rotate(.03deg)">JAN_239_03965</span></div><div class="c" style="left:223.8px;width:174.2px;"><span style="transform:translateY(3.71px) scaleX(.895) rotate(.03deg)">PDS Translation 045631 - 20220907_PX_marketing_offline2</span></div><div class="c" style="left:398.0px;width:84.7px;"><span style="transform:translateY(3.71px) scaleX(.895) rotate(.03deg)">LanguageWire AB</span></div><div class="c" style="left:482.7px;width:76.5px;"><span style="transform:translateY(3.71px) scaleX(.895) rotate(.03deg)">12.09.2022 09:54</span></div><div class="c" style="left:559.2px;width:60.2px;"><span style="transform:translateY(3.71px) scaleX(.895) rotate(.03deg)">13.09.2022 11:00</span></div><div class="c" style="left:619.4px;width:152.9px;"><span style="transform:translateY(3.71px) scaleX(.895) rotate(.03deg)">Allocated to vendors</span></div><div class="c r" style="left:790.1px;width:49.0px;"><span style="transform:translateY(3.71px) scaleX(.895) rotate(.03deg)">0,63</span></div></div>
<div class="row" style="top:154px;"><div class="c" style="left:0;width:17.1px;"><div class="abs" style="left:0;top:0.2px;"><svg class="abs" style="left:2.4px;top:1.1px;" width="14" height="9" viewBox="0 0 14 9"><rect x="1.1" y="0.9" width="7" height="4.7" fill="#f6f7fa" stroke="#8f99ae" stroke-width="0.7"/><path d="M2.4 2.5h4.4M2.4 3.8h4.4" stroke="#c9cedb" stroke-width="0.5"/><path d="M6.3 5.5l1.3 1.4 2-2.4" stroke="#1fa82a" stroke-width="1.15" fill="none"/></svg></div></div><div class="c" style="left:17.1px;width:206.7px;"><span style="transform:translateY(3.9px) scaleX(.895) rotate(.03deg)">JAG_987_00408</span></div><div class="c" style="left:223.8px;width:174.2px;"><span style="transform:translateY(3.9px) scaleX(.895) rotate(.03deg)">STEP_Chinesische Datenblätter_Digital Output Module 9475/32-..</span></div><div class="c" style="left:398.0px;width:84.7px;"><span style="transform:translateY(3.9px) scaleX(.895) rotate(.03deg)">Gilke Language Services</span></div><div class="c" style="left:482.7px;width:76.5px;"><span style="transform:translateY(3.9px) scaleX(.895) rotate(.03deg)">12.09.2022 10:02</span></div><div class="c" style="left:559.2px;width:60.2px;"><span style="transform:translateY(3.9px) scaleX(.895) rotate(.03deg)">13.09.2022 16:00</span></div><div class="c" style="left:619.4px;width:152.9px;"><span style="transform:translateY(3.9px) scaleX(.895) rotate(.03deg)">Received, not allocated</span></div><div class="c r" style="left:790.1px;width:49.0px;"><span style="transform:translateY(3.9px) scaleX(.895) rotate(.03deg)">0</span></div></div>
<div class="row" style="top:164px;"><div class="c" style="left:0;width:17.1px;"><div class="abs" style="left:0;top:0.39px;"><svg class="abs" style="left:2.4px;top:1.1px;" width="14" height="9" viewBox="0 0 14 9"><rect x="1.1" y="0.9" width="7" height="4.7" fill="#f6f7fa" stroke="#8f99ae" stroke-width="0.7"/><path d="M2.4 2.5h4.4M2.4 3.8h4.4" stroke="#c9cedb" stroke-width="0.5"/><path d="M6.3 5.5l1.3 1.4 2-2.4" stroke="#1fa82a" stroke-width="1.15" fill="none"/></svg></div></div><div class="c" style="left:17.1px;width:206.7px;"><span style="transform:translateY(4.09px) scaleX(.895) rotate(.03deg)">JAG_987_00409</span></div><div class="c" style="left:223.8px;width:174.2px;"><span style="transform:translateY(4.09px) scaleX(.895) rotate(.03deg)">STEP_Chinesische Datenblätter_Control Stations_8146_8150  - ..</span></div><div class="c" style="left:398.0px;width:84.7px;"><span style="transform:translateY(4.09px) scaleX(.895) rotate(.03deg)">Gilke Language Services</span></div><div class="c" style="left:482.7px;width:76.5px;"><span style="transform:translateY(4.09px) scaleX(.895) rotate(.03deg)">12.09.2022 10:04</span></div><div class="c" style="left:559.2px;width:60.2px;"><span style="transform:translateY(4.09px) scaleX(.895) rotate(.03deg)">15.09.2022 16:00</span></div><div class="c" style="left:619.4px;width:152.9px;"><span style="transform:translateY(4.09px) scaleX(.895) rotate(.03deg)">Allocated to vendors</span></div><div class="c r" style="left:790.1px;width:49.0px;"><span style="transform:translateY(4.09px) scaleX(.895) rotate(.03deg)">0,81</span></div><div class="c" style="left:915.1px;width:61.9px;"><span style="transform:translateY(4.09px) scaleX(.895) rotate(.03deg)">ОТПРАВИТЬ ДЖИ..</span></div></div>
<div class="row" style="top:174px;"><div class="c" style="left:0;width:17.1px;"><div class="abs" style="left:0;top:0.58px;"><svg class="abs" style="left:2.4px;top:1.1px;" width="14" height="9" viewBox="0 0 14 9"><rect x="1.1" y="0.9" width="7" height="4.7" fill="#f6f7fa" stroke="#8f99ae" stroke-width="0.7"/><path d="M2.4 2.5h4.4M2.4 3.8h4.4" stroke="#c9cedb" stroke-width="0.5"/><path d="M6.3 5.5l1.3 1.4 2-2.4" stroke="#1fa82a" stroke-width="1.15" fill="none"/></svg></div></div><div class="c" style="left:17.1px;width:206.7px;"><span style="transform:translateY(4.28px) scaleX(.895) rotate(.03deg)">JAN_011_78368</span></div><div class="c" style="left:223.8px;width:174.2px;"><span style="transform:translateY(4.28px) scaleX(.895) rotate(.03deg)">Russian (Russia): CnE UE BA Sep-09 HO1</span></div><div class="c" style="left:398.0px;width:84.7px;"><span style="transform:translateY(4.28px) scaleX(.895) rotate(.03deg)">Moravia IT s.r.o.</span></div><div class="c" style="left:482.7px;width:76.5px;"><span style="transform:translateY(4.28px) scaleX(.895) rotate(.03deg)">12.09.2022 10:09</span></div><div class="c" style="left:559.2px;width:60.2px;"><span style="transform:translateY(4.28px) scaleX(.895) rotate(.03deg)">12.09.2022 18:00</span></div><div class="c" style="left:619.4px;width:152.9px;"><span style="transform:translateY(4.28px) scaleX(.895) rotate(.03deg)">Allocated to vendors</span></div><div class="c r" style="left:790.1px;width:49.0px;"><span style="transform:translateY(4.28px) scaleX(.895) rotate(.03deg)">13</span></div><div class="c" style="left:977.0px;width:33.5px;"><span style="transform:translateY(4.28px) scaleX(.895) rotate(.03deg)">CnE_UE_..</span></div></div>
<div class="row" style="top:184px;"><div class="c" style="left:0;width:17.1px;"><div class="abs" style="left:0;top:0.77px;"><svg class="abs" style="left:2.4px;top:1.1px;" width="14" height="9" viewBox="0 0 14 9"><rect x="1.1" y="0.9" width="7" height="4.7" fill="#f6f7fa" stroke="#8f99ae" stroke-width="0.7"/><path d="M2.4 2.5h4.4M2.4 3.8h4.4" stroke="#c9cedb" stroke-width="0.5"/><path d="M6.3 5.5l1.3 1.4 2-2.4" stroke="#1fa82a" stroke-width="1.15" fill="none"/></svg></div></div><div class="c" style="left:17.1px;width:206.7px;"><span style="transform:translateY(4.47px) scaleX(.895) rotate(.03deg)">JAN_426_35818</span></div><div class="c" style="left:223.8px;width:174.2px;"><span style="transform:translateY(4.47px) scaleX(.895) rotate(.03deg)">EMPOLIS (Variant: 1)</span></div><div class="c" style="left:398.0px;width:84.7px;"><span style="transform:translateY(4.47px) scaleX(.895) rotate(.03deg)">Transline</span></div><div class="c" style="left:482.7px;width:76.5px;"><span style="transform:translateY(4.47px) scaleX(.895) rotate(.03deg)">12.09.2022 10:10</span></div><div class="c" style="left:559.2px;width:60.2px;"><span style="transform:translateY(4.47px) scaleX(.895) rotate(.03deg)">14.09.2022 13:00</span></div><div class="c" style="left:619.4px;width:152.9px;"><span style="transform:translateY(4.47px) scaleX(.895) rotate(.03deg)">Received, not allocated</span></div><div class="c r" style="left:790.1px;width:49.0px;"><span style="transform:translateY(4.47px) scaleX(.895) rotate(.03deg)">0</span></div><div class="c" style="left:915.1px;width:61.9px;"><span style="transform:translateY(4.47px) scaleX(.895) rotate(.03deg)">Акикиро?</span></div><div class="c" style="left:977.0px;width:33.5px;"><span style="transform:translateY(4.47px) scaleX(.895) rotate(.03deg)">Bosch Au..</span></div></div>
<div class="row" style="top:194px;"><div class="c" style="left:0;width:17.1px;"><div class="abs" style="left:0;top:0.96px;"><svg class="abs" style="left:2.4px;top:1.1px;" width="14" height="9" viewBox="0 0 14 9"><rect x="1.1" y="0.9" width="7" height="4.7" fill="#f6f7fa" stroke="#8f99ae" stroke-width="0.7"/><path d="M2.4 2.5h4.4M2.4 3.8h4.4" stroke="#c9cedb" stroke-width="0.5"/><path d="M0.9 -0.4l2.8 2.8M3.7 -0.4l-2.8 2.8" stroke="#e01818" stroke-width="1.05"/></svg></div></div><div class="c" style="left:17.1px;width:206.7px;"><span style="transform:translateY(4.66px) scaleX(.895) rotate(.03deg)">JAN_426_35819</span></div><div class="c" style="left:223.8px;width:174.2px;"><span style="transform:translateY(4.66px) scaleX(.895) rotate(.03deg)">EMPOLIS (Variant: 1)</span></div><div class="c" style="left:398.0px;width:84.7px;"><span style="transform:translateY(4.66px) scaleX(.895) rotate(.03deg)">Transline</span></div><div class="c" style="left:482.7px;width:76.5px;"><span style="transform:translateY(4.66px) scaleX(.895) rotate(.03deg)">12.09.2022 10:10</span></div><div class="c" style="left:559.2px;width:60.2px;"><span style="transform:translateY(4.66px) scaleX(.895) rotate(.03deg)">14.09.2022 13:00</span></div><div class="c" style="left:619.4px;width:152.9px;"><span style="transform:translateY(4.66px) scaleX(.895) rotate(.03deg)">Cancelled</span></div><div class="c" style="left:915.1px;width:61.9px;"><span style="transform:translateY(4.66px) scaleX(.895) rotate(.03deg)">задвоился</span></div><div class="c" style="left:977.0px;width:33.5px;"><span style="transform:translateY(4.66px) scaleX(.895) rotate(.03deg)">Bosch Au..</span></div></div>
<div class="row" style="top:205px;"><div class="c" style="left:0;width:17.1px;"><div class="abs" style="left:0;top:0.15px;"><svg class="abs" style="left:2.4px;top:1.1px;" width="14" height="9" viewBox="0 0 14 9"><rect x="1.1" y="0.9" width="7" height="4.7" fill="#f6f7fa" stroke="#8f99ae" stroke-width="0.7"/><path d="M2.4 2.5h4.4M2.4 3.8h4.4" stroke="#c9cedb" stroke-width="0.5"/><path d="M6.3 5.5l1.3 1.4 2-2.4" stroke="#1fa82a" stroke-width="1.15" fill="none"/></svg></div></div><div class="c" style="left:17.1px;width:206.7px;"><span style="transform:translateY(3.85px) scaleX(.895) rotate(.03deg)">JPK_652_03932</span></div><div class="c" style="left:223.8px;width:174.2px;"><span style="transform:translateY(3.85px) scaleX(.895) rotate(.03deg)">2022.09.12__10-05__ODKL en__220912-UCP</span></div><div class="c" style="left:398.0px;width:84.7px;"><span style="transform:translateY(3.85px) scaleX(.895) rotate(.03deg)">Одноклассники ООО</span></div><div class="c" style="left:482.7px;width:76.5px;"><span style="transform:translateY(3.85px) scaleX(.895) rotate(.03deg)">12.09.2022 10:10</span></div><div class="c" style="left:559.2px;width:60.2px;"><span style="transform:translateY(3.85px) scaleX(.895) rotate(.03deg)">12.09.2022 16:00</span></div><div class="c" style="left:619.4px;width:152.9px;"><span style="transform:translateY(3.85px) scaleX(.895) rotate(.03deg)">Allocated to vendors</span></div><div class="c r" style="left:790.1px;width:49.0px;"><span style="transform:translateY(3.85px) scaleX(.895) rotate(.03deg)">3,69</span></div><div class="c" style="left:866.1px;width:49.0px;"><span style="transform:translateY(3.85px) scaleX(.895) rotate(.03deg)">Trubin Egor</span></div></div>
<div class="row" style="top:215px;"><div class="c" style="left:0;width:17.1px;"><div class="abs" style="left:0;top:0.34px;"><svg class="abs" style="left:2.4px;top:1.1px;" width="14" height="9" viewBox="0 0 14 9"><rect x="1.1" y="0.9" width="7" height="4.7" fill="#f6f7fa" stroke="#8f99ae" stroke-width="0.7"/><path d="M2.4 2.5h4.4M2.4 3.8h4.4" stroke="#c9cedb" stroke-width="0.5"/><path d="M6.3 5.5l1.3 1.4 2-2.4" stroke="#1fa82a" stroke-width="1.15" fill="none"/></svg></div></div><div class="c" style="left:17.1px;width:206.7px;"><span style="transform:translateY(4.04px) scaleX(.895) rotate(.03deg)">JPK_652_03933</span></div><div class="c" style="left:223.8px;width:174.2px;"><span style="transform:translateY(4.04px) scaleX(.895) rotate(.03deg)">2022.09.12__10-05__ODKL ru__220912-U4Y</span></div><div class="c" style="left:398.0px;width:84.7px;"><span style="transform:translateY(4.04px) scaleX(.895) rotate(.03deg)">Одноклассники ООО</span></div><div class="c" style="left:482.7px;width:76.5px;"><span style="transform:translateY(4.04px) scaleX(.895) rotate(.03deg)">12.09.2022 10:10</span></div><div class="c" style="left:559.2px;width:60.2px;"><span style="transform:translateY(4.04px) scaleX(.895) rotate(.03deg)">12.09.2022 16:00</span></div><div class="c" style="left:619.4px;width:152.9px;"><span style="transform:translateY(4.04px) scaleX(.895) rotate(.03deg)">Allocated to vendors</span></div><div class="c r" style="left:790.1px;width:49.0px;"><span style="transform:translateY(4.04px) scaleX(.895) rotate(.03deg)">37,97</span></div><div class="c" style="left:866.1px;width:49.0px;"><span style="transform:translateY(4.04px) scaleX(.895) rotate(.03deg)">Trubin Egor</span></div></div>
<div class="row" style="top:225px;"><div class="c" style="left:0;width:17.1px;"><div class="abs" style="left:0;top:0.53px;"><svg class="abs" style="left:2.4px;top:1.1px;" width="14" height="9" viewBox="0 0 14 9"><rect x="1.1" y="0.9" width="7" height="4.7" fill="#f6f7fa" stroke="#8f99ae" stroke-width="0.7"/><path d="M2.4 2.5h4.4M2.4 3.8h4.4" stroke="#c9cedb" stroke-width="0.5"/><path d="M6.3 5.5l1.3 1.4 2-2.4" stroke="#1fa82a" stroke-width="1.15" fill="none"/></svg></div></div><div class="c" style="left:17.1px;width:206.7px;"><span style="transform:translateY(4.23px) scaleX(.895) rotate(.03deg)">JAN_116_08645</span></div><div class="c" style="left:223.8px;width:174.2px;"><span style="transform:translateY(4.23px) scaleX(.895) rotate(.03deg)">Übersetzung //  TD-MBO2209053-001// GEFASOFT</span></div><div class="c" style="left:398.0px;width:84.7px;"><span style="transform:translateY(4.23px) scaleX(.895) rotate(.03deg)">Telelingua/Acolad</span></div><div class="c" style="left:482.7px;width:76.5px;"><span style="transform:translateY(4.23px) scaleX(.895) rotate(.03deg)">12.09.2022 10:10</span></div><div class="c" style="left:559.2px;width:60.2px;"><span style="transform:translateY(4.23px) scaleX(.895) rotate(.03deg)">14.09.2022 11:00</span></div><div class="c" style="left:619.4px;width:152.9px;"><span style="transform:translateY(4.23px) scaleX(.895) rotate(.03deg)">Received, not allocated</span></div><div class="c r" style="left:790.1px;width:49.0px;"><span style="transform:translateY(4.23px) scaleX(.895) rotate(.03deg)">14,99</span></div><div class="c" style="left:977.0px;width:33.5px;"><span style="transform:translateY(4.23px) scaleX(.895) rotate(.03deg)">GEFASO..</span></div></div>
<div class="row" style="top:235px;"><div class="c" style="left:0;width:17.1px;"><div class="abs" style="left:0;top:0.72px;"><svg class="abs" style="left:2.4px;top:1.1px;" width="14" height="9" viewBox="0 0 14 9"><rect x="1.1" y="0.9" width="7" height="4.7" fill="#f6f7fa" stroke="#8f99ae" stroke-width="0.7"/><path d="M2.4 2.5h4.4M2.4 3.8h4.4" stroke="#c9cedb" stroke-width="0.5"/><path d="M6.3 5.5l1.3 1.4 2-2.4" stroke="#1fa82a" stroke-width="1.15" fill="none"/></svg></div></div><div class="c" style="left:17.1px;width:206.7px;"><span style="transform:translateY(4.42px) scaleX(.895) rotate(.03deg)">JPK_786_00496</span></div><div class="c" style="left:223.8px;width:174.2px;"><span style="transform:translateY(4.42px) scaleX(.895) rotate(.03deg)">Соглашение о переводе долга_RU-EN</span></div><div class="c" style="left:398.0px;width:84.7px;"><span style="transform:translateY(4.42px) scaleX(.895) rotate(.03deg)">АК «АЛРОСА» (ПАО)</span></div><div class="c" style="left:482.7px;width:76.5px;"><span style="transform:translateY(4.42px) scaleX(.895) rotate(.03deg)">12.09.2022 10:18</span></div><div class="c" style="left:559.2px;width:60.2px;"><span style="transform:translateY(4.42px) scaleX(.895) rotate(.03deg)">13.09.2022 00:00</span></div><div class="c" style="left:619.4px;width:152.9px;"><span style="transform:translateY(4.42px) scaleX(.895) rotate(.03deg)">Received, not allocated</span></div><div class="c r" style="left:790.1px;width:49.0px;"><span style="transform:translateY(4.42px) scaleX(.895) rotate(.03deg)">0,43</span></div><div class="c" style="left:915.1px;width:61.9px;"><span style="transform:translateY(4.42px) scaleX(.895) rotate(.03deg)">ответ по смете</span></div></div>
<div class="row" style="top:245px;"><div class="c" style="left:0;width:17.1px;"><div class="abs" style="left:0;top:0.91px;"><svg class="abs" style="left:2.4px;top:1.1px;" width="14" height="9" viewBox="0 0 14 9"><rect x="1.1" y="0.9" width="7" height="4.7" fill="#f6f7fa" stroke="#8f99ae" stroke-width="0.7"/><path d="M2.4 2.5h4.4M2.4 3.8h4.4" stroke="#c9cedb" stroke-width="0.5"/><path d="M6.3 5.5l1.3 1.4 2-2.4" stroke="#1fa82a" stroke-width="1.15" fill="none"/></svg></div></div><div class="c" style="left:17.1px;width:206.7px;"><span style="transform:translateY(4.61px) scaleX(.895) rotate(.03deg)">JAN_239_03966</span></div><div class="c" style="left:223.8px;width:174.2px;"><span style="transform:translateY(4.61px) scaleX(.895) rotate(.03deg)">HPO_Keymanager_220907_CES</span></div><div class="c" style="left:398.0px;width:84.7px;"><span style="transform:translateY(4.61px) scaleX(.895) rotate(.03deg)">LanguageWire AB</span></div><div class="c" style="left:482.7px;width:76.5px;"><span style="transform:translateY(4.61px) scaleX(.895) rotate(.03deg)">12.09.2022 10:19</span></div><div class="c" style="left:559.2px;width:60.2px;"><span style="transform:translateY(4.61px) scaleX(.895) rotate(.03deg)">13.09.2022 16:00</span></div><div class="c" style="left:619.4px;width:152.9px;"><span style="transform:translateY(4.61px) scaleX(.895) rotate(.03deg)">Received, not allocated</span></div><div class="c r" style="left:790.1px;width:49.0px;"><span style="transform:translateY(4.61px) scaleX(.895) rotate(.03deg)">0</span></div><div class="c" style="left:977.0px;width:33.5px;"><span style="transform:translateY(4.61px) scaleX(.895) rotate(.03deg)">Gretsch U..</span></div></div>
<div class="row" style="top:256px;"><div class="c" style="left:0;width:17.1px;"><div class="abs" style="left:0;top:0.1px;"><svg class="abs" style="left:2.4px;top:1.1px;" width="14" height="9" viewBox="0 0 14 9"><rect x="1.1" y="0.9" width="7" height="4.7" fill="#f6f7fa" stroke="#8f99ae" stroke-width="0.7"/><path d="M2.4 2.5h4.4M2.4 3.8h4.4" stroke="#c9cedb" stroke-width="0.5"/><path d="M6.3 5.5l1.3 1.4 2-2.4" stroke="#1fa82a" stroke-width="1.15" fill="none"/></svg></div></div><div class="c" style="left:17.1px;width:206.7px;"><span style="transform:translateY(3.8px) scaleX(.895) rotate(.03deg)">LCY_915_01194</span></div><div class="c" style="left:223.8px;width:174.2px;"><span style="transform:translateY(3.8px) scaleX(.895) rotate(.03deg)">A-539763-1939058</span></div><div class="c" style="left:398.0px;width:84.7px;"><span style="transform:translateY(3.8px) scaleX(.895) rotate(.03deg)">Argos Translations (ILS)</span></div><div class="c" style="left:482.7px;width:76.5px;"><span style="transform:translateY(3.8px) scaleX(.895) rotate(.03deg)">12.09.2022 10:20</span></div><div class="c" style="left:559.2px;width:60.2px;"><span style="transform:translateY(3.8px) scaleX(.895) rotate(.03deg)">12.09.2022 13:00</span></div><div class="c" style="left:619.4px;width:152.9px;"><span style="transform:translateY(3.8px) scaleX(.895) rotate(.03deg)">Allocated to vendors</span></div><div class="c r" style="left:790.1px;width:49.0px;"><span style="transform:translateY(3.8px) scaleX(.895) rotate(.03deg)">10,05</span></div><div class="c" style="left:915.1px;width:61.9px;"><span style="transform:translateY(3.8px) scaleX(.895) rotate(.03deg)">пер до 12 13:00</span></div></div>
<div class="row" style="top:266px;"><div class="c" style="left:0;width:17.1px;"><div class="abs" style="left:0;top:0.29px;"><svg class="abs" style="left:2.4px;top:1.1px;" width="14" height="9" viewBox="0 0 14 9"><rect x="1.1" y="0.9" width="7" height="4.7" fill="#f6f7fa" stroke="#8f99ae" stroke-width="0.7"/><path d="M2.4 2.5h4.4M2.4 3.8h4.4" stroke="#c9cedb" stroke-width="0.5"/><path d="M6.3 5.5l1.3 1.4 2-2.4" stroke="#1fa82a" stroke-width="1.15" fill="none"/></svg></div></div><div class="c" style="left:17.1px;width:206.7px;"><span style="transform:translateY(3.99px) scaleX(.895) rotate(.03deg)">JAN_239_03967</span></div><div class="c" style="left:223.8px;width:174.2px;"><span style="transform:translateY(3.99px) scaleX(.895) rotate(.03deg)">HPO_Keymanager_220907_SLK</span></div><div class="c" style="left:398.0px;width:84.7px;"><span style="transform:translateY(3.99px) scaleX(.895) rotate(.03deg)">LanguageWire AB</span></div><div class="c" style="left:482.7px;width:76.5px;"><span style="transform:translateY(3.99px) scaleX(.895) rotate(.03deg)">12.09.2022 10:21</span></div><div class="c" style="left:559.2px;width:60.2px;"><span style="transform:translateY(3.99px) scaleX(.895) rotate(.03deg)">13.09.2022 16:00</span></div><div class="c" style="left:619.4px;width:152.9px;"><span style="transform:translateY(3.99px) scaleX(.895) rotate(.03deg)">Received, not allocated</span></div><div class="c r" style="left:790.1px;width:49.0px;"><span style="transform:translateY(3.99px) scaleX(.895) rotate(.03deg)">0</span></div><div class="c" style="left:977.0px;width:33.5px;"><span style="transform:translateY(3.99px) scaleX(.895) rotate(.03deg)">Gretsch U..</span></div></div>
<div class="row" style="top:276px;"><div class="c" style="left:0;width:17.1px;"><div class="abs" style="left:0;top:0.48px;"><svg class="abs" style="left:2.4px;top:1.1px;" width="14" height="9" viewBox="0 0 14 9"><rect x="1.1" y="0.9" width="7" height="4.7" fill="#f6f7fa" stroke="#8f99ae" stroke-width="0.7"/><path d="M2.4 2.5h4.4M2.4 3.8h4.4" stroke="#c9cedb" stroke-width="0.5"/><path d="M6.3 5.5l1.3 1.4 2-2.4" stroke="#1fa82a" stroke-width="1.15" fill="none"/></svg></div></div><div class="c" style="left:17.1px;width:206.7px;"><span style="transform:translateY(4.18px) scaleX(.895) rotate(.03deg)">JAN_239_03968</span></div><div class="c" style="left:223.8px;width:174.2px;"><span style="transform:translateY(4.18px) scaleX(.895) rotate(.03deg)">HPO_Keymanager_220907_RON</span></div><div class="c" style="left:398.0px;width:84.7px;"><span style="transform:translateY(4.18px) scaleX(.895) rotate(.03deg)">LanguageWire AB</span></div><div class="c" style="left:482.7px;width:76.5px;"><span style="transform:translateY(4.18px) scaleX(.895) rotate(.03deg)">12.09.2022 10:22</span></div><div class="c" style="left:559.2px;width:60.2px;"><span style="transform:translateY(4.18px) scaleX(.895) rotate(.03deg)">13.09.2022 16:00</span></div><div class="c" style="left:619.4px;width:152.9px;"><span style="transform:translateY(4.18px) scaleX(.895) rotate(.03deg)">Received, not allocated</span></div><div class="c r" style="left:790.1px;width:49.0px;"><span style="transform:translateY(4.18px) scaleX(.895) rotate(.03deg)">0</span></div><div class="c" style="left:977.0px;width:33.5px;"><span style="transform:translateY(4.18px) scaleX(.895) rotate(.03deg)">Gretsch U..</span></div></div>
<div class="row" style="top:286px;"><div class="c" style="left:0;width:17.1px;"><div class="abs" style="left:0;top:0.67px;"><svg class="abs" style="left:2.4px;top:1.1px;" width="14" height="9" viewBox="0 0 14 9"><rect x="1.1" y="0.9" width="7" height="4.7" fill="#f6f7fa" stroke="#8f99ae" stroke-width="0.7"/><path d="M2.4 2.5h4.4M2.4 3.8h4.4" stroke="#c9cedb" stroke-width="0.5"/><path d="M6.3 5.5l1.3 1.4 2-2.4" stroke="#1fa82a" stroke-width="1.15" fill="none"/></svg></div></div><div class="c" style="left:17.1px;width:206.7px;"><span style="transform:translateY(4.37px) scaleX(.895) rotate(.03deg)">JAN_134_07986</span></div><div class="c" style="left:223.8px;width:174.2px;"><span style="transform:translateY(4.37px) scaleX(.895) rotate(.03deg)">WCC AEM 9-8 diag printer &amp; diag comp</span></div><div class="c" style="left:398.0px;width:84.7px;"><span style="transform:translateY(4.37px) scaleX(.895) rotate(.03deg)">HP Inc. (HP USA)</span></div><div class="c" style="left:482.7px;width:76.5px;"><span style="transform:translateY(4.37px) scaleX(.895) rotate(.03deg)">12.09.2022 10:24</span></div><div class="c" style="left:559.2px;width:60.2px;"><span style="transform:translateY(4.37px) scaleX(.895) rotate(.03deg)">12.09.2022 10:24</span></div><div class="c" style="left:619.4px;width:152.9px;"><span style="transform:translateY(4.37px) scaleX(.895) rotate(.03deg)">Received, not allocated</span></div><div class="c r" style="left:790.1px;width:49.0px;"><span style="transform:translateY(4.37px) scaleX(.895) rotate(.03deg)">0</span></div><div class="c" style="left:977.0px;width:33.5px;"><span style="transform:translateY(4.37px) scaleX(.895) rotate(.03deg)">Web UI</span></div></div>
<div class="row" style="top:296px;"><div class="c" style="left:0;width:17.1px;"><div class="abs" style="left:0;top:0.86px;"><svg class="abs" style="left:2.4px;top:1.1px;" width="14" height="9" viewBox="0 0 14 9"><rect x="1.1" y="0.9" width="7" height="4.7" fill="#f6f7fa" stroke="#8f99ae" stroke-width="0.7"/><path d="M2.4 2.5h4.4M2.4 3.8h4.4" stroke="#c9cedb" stroke-width="0.5"/><path d="M6.3 5.5l1.3 1.4 2-2.4" stroke="#1fa82a" stroke-width="1.15" fill="none"/></svg></div></div><div class="c" style="left:17.1px;width:206.7px;"><span style="transform:translateY(4.56px) scaleX(.895) rotate(.03deg)">JAN_239_03969</span></div><div class="c" style="left:223.8px;width:174.2px;"><span style="transform:translateY(4.56px) scaleX(.895) rotate(.03deg)">HPO_Keymanager_220907_RUS</span></div><div class="c" style="left:398.0px;width:84.7px;"><span style="transform:translateY(4.56px) scaleX(.895) rotate(.03deg)">LanguageWire AB</span></div><div class="c" style="left:482.7px;width:76.5px;"><span style="transform:translateY(4.56px) scaleX(.895) rotate(.03deg)">12.09.2022 10:24</span></div><div class="c" style="left:559.2px;width:60.2px;"><span style="transform:translateY(4.56px) scaleX(.895) rotate(.03deg)">13.09.2022 16:00</span></div><div class="c" style="left:619.4px;width:152.9px;"><span style="transform:translateY(4.56px) scaleX(.895) rotate(.03deg)">Allocated to vendors</span></div><div class="c r" style="left:790.1px;width:49.0px;"><span style="transform:translateY(4.56px) scaleX(.895) rotate(.03deg)">1,56</span></div><div class="c" style="left:915.1px;width:61.9px;"><span style="transform:translateY(4.56px) scaleX(.895) rotate(.03deg)">на переводе у Боро..</span></div><div class="c" style="left:977.0px;width:33.5px;"><span style="transform:translateY(4.56px) scaleX(.895) rotate(.03deg)">Gretsch U..</span></div></div>
<div class="row" style="top:307px;"><div class="c" style="left:0;width:17.1px;"><div class="abs" style="left:0;top:0.05px;"><svg class="abs" style="left:2.4px;top:1.1px;" width="14" height="9" viewBox="0 0 14 9"><rect x="1.1" y="0.9" width="7" height="4.7" fill="#f6f7fa" stroke="#8f99ae" stroke-width="0.7"/><path d="M2.4 2.5h4.4M2.4 3.8h4.4" stroke="#c9cedb" stroke-width="0.5"/><path d="M6.3 5.5l1.3 1.4 2-2.4" stroke="#1fa82a" stroke-width="1.15" fill="none"/></svg></div></div><div class="c" style="left:17.1px;width:206.7px;"><span style="transform:translateY(3.75px) scaleX(.895) rotate(.03deg)">JAN_011_78369</span></div><div class="c" style="left:223.8px;width:174.2px;"><span style="transform:translateY(3.75px) scaleX(.895) rotate(.03deg)">KZ_Additional TEP Review Syndicated Content - Product Catego..</span></div><div class="c" style="left:398.0px;width:84.7px;"><span style="transform:translateY(3.75px) scaleX(.895) rotate(.03deg)">Moravia IT s.r.o.</span></div><div class="c" style="left:482.7px;width:76.5px;"><span style="transform:translateY(3.75px) scaleX(.895) rotate(.03deg)">12.09.2022 10:24</span></div><div class="c" style="left:559.2px;width:60.2px;"><span style="transform:translateY(3.75px) scaleX(.895) rotate(.03deg)">12.09.2022 18:00</span></div><div class="c" style="left:619.4px;width:152.9px;"><span style="transform:translateY(3.75px) scaleX(.895) rotate(.03deg)">Allocated to vendors</span></div><div class="c r" style="left:790.1px;width:49.0px;"><span style="transform:translateY(3.75px) scaleX(.895) rotate(.03deg)">0,95</span></div><div class="c" style="left:977.0px;width:33.5px;"><span style="transform:translateY(3.75px) scaleX(.895) rotate(.03deg)">Apple Mar..</span></div></div>
<div class="row" style="top:317px;"><div class="c" style="left:0;width:17.1px;"><div class="abs" style="left:0;top:0.24px;"><svg class="abs" style="left:2.4px;top:1.1px;" width="14" height="9" viewBox="0 0 14 9"><rect x="1.1" y="0.9" width="7" height="4.7" fill="#f6f7fa" stroke="#8f99ae" stroke-width="0.7"/><path d="M2.4 2.5h4.4M2.4 3.8h4.4" stroke="#c9cedb" stroke-width="0.5"/><path d="M6.3 5.5l1.3 1.4 2-2.4" stroke="#1fa82a" stroke-width="1.15" fill="none"/></svg></div></div><div class="c" style="left:17.1px;width:206.7px;"><span style="transform:translateY(3.94px) scaleX(.895) rotate(.03deg)">JAN_239_03970</span></div><div class="c" style="left:223.8px;width:174.2px;"><span style="transform:translateY(3.94px) scaleX(.895) rotate(.03deg)">HPO_Keymanager_220907_HRV</span></div><div class="c" style="left:398.0px;width:84.7px;"><span style="transform:translateY(3.94px) scaleX(.895) rotate(.03deg)">LanguageWire AB</span></div><div class="c" style="left:482.7px;width:76.5px;"><span style="transform:translateY(3.94px) scaleX(.895) rotate(.03deg)">12.09.2022 10:26</span></div><div class="c" style="left:559.2px;width:60.2px;"><span style="transform:translateY(3.94px) scaleX(.895) rotate(.03deg)">13.09.2022 16:00</span></div><div class="c" style="left:619.4px;width:152.9px;"><span style="transform:translateY(3.94px) scaleX(.895) rotate(.03deg)">Received, not allocated</span></div><div class="c r" style="left:790.1px;width:49.0px;"><span style="transform:translateY(3.94px) scaleX(.895) rotate(.03deg)">0</span></div><div class="c" style="left:977.0px;width:33.5px;"><span style="transform:translateY(3.94px) scaleX(.895) rotate(.03deg)">Gretsch U..</span></div></div>
<div class="row" style="top:327px;"><div class="c" style="left:0;width:17.1px;"><div class="abs" style="left:0;top:0.43px;"><svg class="abs" style="left:2.4px;top:1.1px;" width="14" height="9" viewBox="0 0 14 9"><rect x="1.1" y="0.9" width="7" height="4.7" fill="#f6f7fa" stroke="#8f99ae" stroke-width="0.7"/><path d="M2.4 2.5h4.4M2.4 3.8h4.4" stroke="#c9cedb" stroke-width="0.5"/><path d="M6.3 5.5l1.3 1.4 2-2.4" stroke="#1fa82a" stroke-width="1.15" fill="none"/></svg></div></div><div class="c" style="left:17.1px;width:206.7px;"><span style="transform:translateY(4.13px) scaleX(.895) rotate(.03deg)">JPK_810_00358</span></div><div class="c" style="left:223.8px;width:174.2px;"><span style="transform:translateY(4.13px) scaleX(.895) rotate(.03deg)">Перевод журнал RUSSPASS (актуальные статьи сентябрь)</span></div><div class="c" style="left:398.0px;width:84.7px;"><span style="transform:translateY(4.13px) scaleX(.895) rotate(.03deg)">Welcome Moscow / Проектн..</span></div><div class="c" style="left:482.7px;width:76.5px;"><span style="transform:translateY(4.13px) scaleX(.895) rotate(.03deg)">12.09.2022 10:27</span></div><div class="c" style="left:559.2px;width:60.2px;"><span style="transform:translateY(4.13px) scaleX(.895) rotate(.03deg)">13.09.2022 14:00</span></div><div class="c" style="left:619.4px;width:152.9px;"><span style="transform:translateY(4.13px) scaleX(.895) rotate(.03deg)">Received, not allocated</span></div><div class="c r" style="left:790.1px;width:49.0px;"><span style="transform:translateY(4.13px) scaleX(.895) rotate(.03deg)">39,9</span></div></div>
<div class="row" style="top:337px;"><div class="c" style="left:0;width:17.1px;"><div class="abs" style="left:0;top:0.62px;"><svg class="abs" style="left:2.4px;top:1.1px;" width="14" height="9" viewBox="0 0 14 9"><rect x="1.1" y="0.9" width="7" height="4.7" fill="#f6f7fa" stroke="#8f99ae" stroke-width="0.7"/><path d="M2.4 2.5h4.4M2.4 3.8h4.4" stroke="#c9cedb" stroke-width="0.5"/></svg></div></div><div class="c" style="left:17.1px;width:206.7px;"><span style="transform:translateY(4.32px) scaleX(.895) rotate(.03deg)">JAN_426_35820</span></div><div class="c" style="left:223.8px;width:174.2px;"><span style="transform:translateY(4.32px) scaleX(.895) rotate(.03deg)">EMPOLIS (Variant: 1)</span></div><div class="c" style="left:398.0px;width:84.7px;"><span style="transform:translateY(4.32px) scaleX(.895) rotate(.03deg)">Transline</span></div><div class="c" style="left:482.7px;width:76.5px;"><span style="transform:translateY(4.32px) scaleX(.895) rotate(.03deg)">12.09.2022 10:40</span></div><div class="c" style="left:559.2px;width:60.2px;"><span style="transform:translateY(4.32px) scaleX(.895) rotate(.03deg)">14.09.2022 13:00</span></div><div class="c" style="left:619.4px;width:152.9px;"><span style="transform:translateY(4.32px) scaleX(.895) rotate(.03deg)">Received, not allocated</span></div><div class="c" style="left:977.0px;width:33.5px;"><span style="transform:translateY(4.32px) scaleX(.895) rotate(.03deg)">Bosch Au..</span></div></div>
<div class="row" style="top:347px;"><div class="c" style="left:0;width:17.1px;"><div class="abs" style="left:0;top:0.81px;"><svg class="abs" style="left:2.4px;top:1.1px;" width="14" height="9" viewBox="0 0 14 9"><rect x="1.1" y="0.9" width="7" height="4.7" fill="#f6f7fa" stroke="#8f99ae" stroke-width="0.7"/><path d="M2.4 2.5h4.4M2.4 3.8h4.4" stroke="#c9cedb" stroke-width="0.5"/></svg></div></div><div class="c" style="left:17.1px;width:206.7px;"><span style="transform:translateY(4.51px) scaleX(.895) rotate(.03deg)">JAN_426_35821</span></div><div class="c" style="left:223.8px;width:174.2px;"><span style="transform:translateY(4.51px) scaleX(.895) rotate(.03deg)">EMPOLIS (Variant: 1)</span></div><div class="c" style="left:398.0px;width:84.7px;"><span style="transform:translateY(4.51px) scaleX(.895) rotate(.03deg)">Transline</span></div><div class="c" style="left:482.7px;width:76.5px;"><span style="transform:translateY(4.51px) scaleX(.895) rotate(.03deg)">12.09.2022 10:40</span></div><div class="c" style="left:559.2px;width:60.2px;"><span style="transform:translateY(4.51px) scaleX(.895) rotate(.03deg)">14.09.2022 13:00</span></div><div class="c" style="left:619.4px;width:152.9px;"><span style="transform:translateY(4.51px) scaleX(.895) rotate(.03deg)">Received, not allocated</span></div><div class="c" style="left:977.0px;width:33.5px;"><span style="transform:translateY(4.51px) scaleX(.895) rotate(.03deg)">Bosch Au..</span></div></div>
<div class="row" style="top:358px;"><div class="c" style="left:0;width:17.1px;"><div class="abs" style="left:0;top:0.0px;"><svg class="abs" style="left:2.4px;top:1.1px;" width="14" height="9" viewBox="0 0 14 9"><rect x="1.1" y="0.9" width="7" height="4.7" fill="#f6f7fa" stroke="#8f99ae" stroke-width="0.7"/><path d="M2.4 2.5h4.4M2.4 3.8h4.4" stroke="#c9cedb" stroke-width="0.5"/><path d="M6.3 5.5l1.3 1.4 2-2.4" stroke="#1fa82a" stroke-width="1.15" fill="none"/></svg></div></div><div class="c" style="left:17.1px;width:206.7px;"><span style="transform:translateY(3.7px) scaleX(.895) rotate(.03deg)">JAG_305_00325</span></div><div class="c" style="left:223.8px;width:174.2px;"><span style="transform:translateY(3.7px) scaleX(.895) rotate(.03deg)">H2022/07637/EN-US » HY/1/1</span></div><div class="c" style="left:398.0px;width:84.7px;"><span style="transform:translateY(3.7px) scaleX(.895) rotate(.03deg)">Hunnect Ltd.</span></div><div class="c" style="left:482.7px;width:76.5px;"><span style="transform:translateY(3.7px) scaleX(.895) rotate(.03deg)">12.09.2022 10:41</span></div><div class="c" style="left:559.2px;width:60.2px;"><span style="transform:translateY(3.7px) scaleX(.895) rotate(.03deg)">13.09.2022 09:30</span></div><div class="c" style="left:619.4px;width:152.9px;"><span style="transform:translateY(3.7px) scaleX(.895) rotate(.03deg)">Allocated to vendors</span></div><div class="c r" style="left:790.1px;width:49.0px;"><span style="transform:translateY(3.7px) scaleX(.895) rotate(.03deg)">10,68</span></div></div>
<div class="row" style="top:368px;"><div class="c" style="left:0;width:17.1px;"><div class="abs" style="left:0;top:0.19px;"><svg class="abs" style="left:2.4px;top:1.1px;" width="14" height="9" viewBox="0 0 14 9"><rect x="1.1" y="0.9" width="7" height="4.7" fill="#f6f7fa" stroke="#8f99ae" stroke-width="0.7"/><path d="M2.4 2.5h4.4M2.4 3.8h4.4" stroke="#c9cedb" stroke-width="0.5"/><path d="M6.3 5.5l1.3 1.4 2-2.4" stroke="#1fa82a" stroke-width="1.15" fill="none"/></svg></div></div><div class="c" style="left:17.1px;width:206.7px;"><span style="transform:translateY(3.89px) scaleX(.895) rotate(.03deg)">JCY_551_81081</span></div><div class="c" style="left:223.8px;width:174.2px;"><span style="transform:translateY(3.89px) scaleX(.895) rotate(.03deg)">SPOTIFUS_2208_P0208 Transcription Request - Tier 2 Wave 3 |..</span></div><div class="c" style="left:398.0px;width:84.7px;"><span style="transform:translateY(3.89px) scaleX(.895) rotate(.03deg)">Welocalize (USD)</span></div><div class="c" style="left:482.7px;width:76.5px;"><span style="transform:translateY(3.89px) scaleX(.895) rotate(.03deg)">12.09.2022 10:48</span></div><div class="c" style="left:559.2px;width:60.2px;"><span style="transform:translateY(3.89px) scaleX(.895) rotate(.03deg)">13.09.2022 11:00</span></div><div class="c" style="left:619.4px;width:152.9px;"><span style="transform:translateY(3.89px) scaleX(.895) rotate(.03deg)">Received, not allocated</span></div><div class="c r" style="left:790.1px;width:49.0px;"><span style="transform:translateY(3.89px) scaleX(.895) rotate(.03deg)">0</span></div></div>
<div class="row" style="top:378px;"><div class="c" style="left:0;width:17.1px;"><div class="abs" style="left:0;top:0.38px;"><svg class="abs" style="left:2.4px;top:1.1px;" width="14" height="9" viewBox="0 0 14 9"><rect x="1.1" y="0.9" width="7" height="4.7" fill="#f6f7fa" stroke="#8f99ae" stroke-width="0.7"/><path d="M2.4 2.5h4.4M2.4 3.8h4.4" stroke="#c9cedb" stroke-width="0.5"/></svg></div></div><div class="c" style="left:17.1px;width:206.7px;"><span style="transform:translateY(4.08px) scaleX(.895) rotate(.03deg)">LCY_899_11668</span></div><div class="c" style="left:223.8px;width:174.2px;"><span style="transform:translateY(4.08px) scaleX(.895) rotate(.03deg)">O-115348-TRA-137 - Siemens AG</span></div><div class="c" style="left:398.0px;width:84.7px;"><span style="transform:translateY(4.08px) scaleX(.895) rotate(.03deg)">nlg GmbH</span></div><div class="c" style="left:482.7px;width:76.5px;"><span style="transform:translateY(4.08px) scaleX(.895) rotate(.03deg)">12.09.2022 10:54</span></div><div class="c" style="left:559.2px;width:60.2px;"><span style="transform:translateY(4.08px) scaleX(.895) rotate(.03deg)">13.09.2022 11:00</span></div><div class="c" style="left:619.4px;width:152.9px;"><span style="transform:translateY(4.08px) scaleX(.895) rotate(.03deg)">Received, not allocated</span></div><div class="c r" style="left:790.1px;width:49.0px;"><span style="transform:translateY(4.08px) scaleX(.895) rotate(.03deg)">1,61</span></div></div>
<div class="row" style="top:388px;"><div class="c" style="left:0;width:17.1px;"><div class="abs" style="left:0;top:0.57px;"><svg class="abs" style="left:2.4px;top:1.1px;" width="14" height="9" viewBox="0 0 14 9"><rect x="1.1" y="0.9" width="7" height="4.7" fill="#f6f7fa" stroke="#8f99ae" stroke-width="0.7"/><path d="M2.4 2.5h4.4M2.4 3.8h4.4" stroke="#c9cedb" stroke-width="0.5"/></svg></div></div><div class="c" style="left:17.1px;width:206.7px;"><span style="transform:translateY(4.27px) scaleX(.895) rotate(.03deg)">JCY_551_81082</span></div><div class="c" style="left:223.8px;width:174.2px;"><span style="transform:translateY(4.27px) scaleX(.895) rotate(.03deg)">43406613_GOOGLE_2209_P58185_kk-KZ</span></div><div class="c" style="left:398.0px;width:84.7px;"><span style="transform:translateY(4.27px) scaleX(.895) rotate(.03deg)">Welocalize (USD)</span></div><div class="c" style="left:482.7px;width:76.5px;"><span style="transform:translateY(4.27px) scaleX(.895) rotate(.03deg)">12.09.2022 10:55</span></div><div class="c" style="left:559.2px;width:60.2px;"><span style="transform:translateY(4.27px) scaleX(.895) rotate(.03deg)">14.09.2022 19:26</span></div><div class="c" style="left:619.4px;width:152.9px;"><span style="transform:translateY(4.27px) scaleX(.895) rotate(.03deg)">Received, not allocated</span></div><div class="c" style="left:977.0px;width:33.5px;"><span style="transform:translateY(4.27px) scaleX(.895) rotate(.03deg)">Google In..</span></div></div>
<div class="row" style="top:398px;"><div class="c" style="left:0;width:17.1px;"><div class="abs" style="left:0;top:0.76px;"><svg class="abs" style="left:2.4px;top:1.1px;" width="14" height="9" viewBox="0 0 14 9"><rect x="1.1" y="0.9" width="7" height="4.7" fill="#f6f7fa" stroke="#8f99ae" stroke-width="0.7"/><path d="M2.4 2.5h4.4M2.4 3.8h4.4" stroke="#c9cedb" stroke-width="0.5"/></svg></div></div><div class="c" style="left:17.1px;width:206.7px;"><span style="transform:translateY(4.46px) scaleX(.895) rotate(.03deg)">JCY_551_81083</span></div><div class="c" style="left:223.8px;width:174.2px;"><span style="transform:translateY(4.46px) scaleX(.895) rotate(.03deg)">43406615_GOOGLE_2209_P58185_ka-GE</span></div><div class="c" style="left:398.0px;width:84.7px;"><span style="transform:translateY(4.46px) scaleX(.895) rotate(.03deg)">Welocalize (USD)</span></div><div class="c" style="left:482.7px;width:76.5px;"><span style="transform:translateY(4.46px) scaleX(.895) rotate(.03deg)">12.09.2022 10:55</span></div><div class="c" style="left:559.2px;width:60.2px;"><span style="transform:translateY(4.46px) scaleX(.895) rotate(.03deg)">14.09.2022 19:26</span></div><div class="c" style="left:619.4px;width:152.9px;"><span style="transform:translateY(4.46px) scaleX(.895) rotate(.03deg)">Received, not allocated</span></div><div class="c" style="left:977.0px;width:33.5px;"><span style="transform:translateY(4.46px) scaleX(.895) rotate(.03deg)">Google In..</span></div></div>
<div class="row" style="top:408px;"><div class="c" style="left:0;width:17.1px;"><div class="abs" style="left:0;top:0.95px;"><svg class="abs" style="left:2.4px;top:1.1px;" width="14" height="9" viewBox="0 0 14 9"><rect x="1.1" y="0.9" width="7" height="4.7" fill="#f6f7fa" stroke="#8f99ae" stroke-width="0.7"/><path d="M2.4 2.5h4.4M2.4 3.8h4.4" stroke="#c9cedb" stroke-width="0.5"/></svg></div></div><div class="c" style="left:17.1px;width:206.7px;"><span style="transform:translateY(4.65px) scaleX(.895) rotate(.03deg)">JAN_011_78370</span></div><div class="c" style="left:223.8px;width:174.2px;"><span style="transform:translateY(4.65px) scaleX(.895) rotate(.03deg)">[#23680721] CHA_CIS_iPhone14_Price-Tickets_Sept08 :: Transl..</span></div><div class="c" style="left:398.0px;width:84.7px;"><span style="transform:translateY(4.65px) scaleX(.895) rotate(.03deg)">Moravia IT s.r.o.</span></div><div class="c" style="left:482.7px;width:76.5px;"><span style="transform:translateY(4.65px) scaleX(.895) rotate(.03deg)">12.09.2022 10:55</span></div><div class="c" style="left:559.2px;width:60.2px;"><span style="transform:translateY(4.65px) scaleX(.895) rotate(.03deg)">12.09.2022 18:00</span></div><div class="c" style="left:619.4px;width:152.9px;"><span style="transform:translateY(4.65px) scaleX(.895) rotate(.03deg)">Received, not allocated</span></div><div class="c" style="left:915.1px;width:61.9px;"><span style="transform:translateY(4.65px) scaleX(.895) rotate(.03deg)">Не найдено соотве..</span></div><div class="c" style="left:977.0px;width:33.5px;"><span style="transform:translateY(4.65px) scaleX(.895) rotate(.03deg)">Apple Mar..</span></div></div>
<div class="row" style="top:419px;"><div class="c" style="left:0;width:17.1px;"><div class="abs" style="left:0;top:0.14px;"><svg class="abs" style="left:2.4px;top:1.1px;" width="14" height="9" viewBox="0 0 14 9"><rect x="1.1" y="0.9" width="7" height="4.7" fill="#f6f7fa" stroke="#8f99ae" stroke-width="0.7"/><path d="M2.4 2.5h4.4M2.4 3.8h4.4" stroke="#c9cedb" stroke-width="0.5"/><path d="M6.3 5.5l1.3 1.4 2-2.4" stroke="#1fa82a" stroke-width="1.15" fill="none"/></svg></div></div><div class="c" style="left:17.1px;width:206.7px;"><span style="transform:translateY(3.84px) scaleX(.895) rotate(.03deg)">JPK_650_00369</span></div><div class="c" style="left:223.8px;width:174.2px;"><span style="transform:translateY(3.84px) scaleX(.895) rotate(.03deg)">Заявка_№328216</span></div><div class="c" style="left:398.0px;width:84.7px;"><span style="transform:translateY(3.84px) scaleX(.895) rotate(.03deg)">Pepsico Russia</span></div><div class="c" style="left:482.7px;width:76.5px;"><span style="transform:translateY(3.84px) scaleX(.895) rotate(.03deg)">12.09.2022 23:59</span></div><div class="c" style="left:559.2px;width:60.2px;"><span style="transform:translateY(3.84px) scaleX(.895) rotate(.03deg)">16.09.2022 19:00</span></div><div class="c" style="left:619.4px;width:152.9px;"><span style="transform:translateY(3.84px) scaleX(.895) rotate(.03deg)">Allocated to vendors</span></div><div class="c r" style="left:790.1px;width:49.0px;"><span style="transform:translateY(3.84px) scaleX(.895) rotate(.03deg)">25,05</span></div></div>
<div class="row" style="top:429px;"><div class="c" style="left:0;width:17.1px;"><div class="abs" style="left:0;top:0.33px;"><svg class="abs" style="left:2.4px;top:1.1px;" width="14" height="9" viewBox="0 0 14 9"><rect x="1.1" y="0.9" width="7" height="4.7" fill="#f6f7fa" stroke="#8f99ae" stroke-width="0.7"/><path d="M2.4 2.5h4.4M2.4 3.8h4.4" stroke="#c9cedb" stroke-width="0.5"/><path d="M6.3 5.5l1.3 1.4 2-2.4" stroke="#1fa82a" stroke-width="1.15" fill="none"/></svg></div></div><div class="c" style="left:17.1px;width:206.7px;"><span style="transform:translateY(4.03px) scaleX(.895) rotate(.03deg)">JAN_134_07983</span></div><div class="c" style="left:223.8px;width:174.2px;"><span style="transform:translateY(4.03px) scaleX(.895) rotate(.03deg)">Interpreting remote EN-SP 12.09.2022, 7.00 am ~ 9.00 am Pacific..</span></div><div class="c" style="left:398.0px;width:84.7px;"><span style="transform:translateY(4.03px) scaleX(.895) rotate(.03deg)">HP Inc. (HP USA)</span></div><div class="c" style="left:482.7px;width:76.5px;"><span style="transform:translateY(4.03px) scaleX(.895) rotate(.03deg)">12.09.2022 23:59</span></div><div class="c" style="left:559.2px;width:60.2px;"><span style="transform:translateY(4.03px) scaleX(.895) rotate(.03deg)">12.09.2022 00:00</span></div><div class="c" style="left:619.4px;width:152.9px;"><span style="transform:translateY(4.03px) scaleX(.895) rotate(.03deg)">Received, not allocated</span></div><div class="c r" style="left:790.1px;width:49.0px;"><span style="transform:translateY(4.03px) scaleX(.895) rotate(.03deg)">0</span></div></div>
<div class="row" style="top:439px;"><div class="c" style="left:0;width:17.1px;"><div class="abs" style="left:0;top:0.52px;"><svg class="abs" style="left:2.4px;top:1.1px;" width="14" height="9" viewBox="0 0 14 9"><rect x="1.1" y="0.9" width="7" height="4.7" fill="#f6f7fa" stroke="#8f99ae" stroke-width="0.7"/><path d="M2.4 2.5h4.4M2.4 3.8h4.4" stroke="#c9cedb" stroke-width="0.5"/></svg></div></div><div class="c" style="left:17.1px;width:206.7px;"><span style="transform:translateY(4.22px) scaleX(.895) rotate(.03deg)">LCY_915_01192</span></div><div class="c" style="left:223.8px;width:174.2px;"><span style="transform:translateY(4.22px) scaleX(.895) rotate(.03deg)">P-539749, A-539749-1938950 Task Revision + LQA</span></div><div class="c" style="left:398.0px;width:84.7px;"><span style="transform:translateY(4.22px) scaleX(.895) rotate(.03deg)">Argos Translations (ILS)</span></div><div class="c" style="left:482.7px;width:76.5px;"><span style="transform:translateY(4.22px) scaleX(.895) rotate(.03deg)">14.09.2022 11:00</span></div><div class="c" style="left:559.2px;width:60.2px;"><span style="transform:translateY(4.22px) scaleX(.895) rotate(.03deg)">14.09.2022 18:40</span></div><div class="c" style="left:619.4px;width:152.9px;"><span style="transform:translateY(4.22px) scaleX(.895) rotate(.03deg)">Deferred</span></div></div>
<div class="row" style="top:449px;"><div class="c" style="left:0;width:17.1px;"><div class="abs" style="left:0;top:0.71px;"><svg class="abs" style="left:2.4px;top:1.1px;" width="14" height="9" viewBox="0 0 14 9"><rect x="1.1" y="0.9" width="7" height="4.7" fill="#f6f7fa" stroke="#8f99ae" stroke-width="0.7"/><path d="M2.4 2.5h4.4M2.4 3.8h4.4" stroke="#c9cedb" stroke-width="0.5"/><path d="M6.3 5.5l1.3 1.4 2-2.4" stroke="#1fa82a" stroke-width="1.15" fill="none"/></svg></div></div><div class="c" style="left:17.1px;width:206.7px;"><span style="transform:translateY(4.41px) scaleX(.895) rotate(.03deg)">JAN_239_03896</span></div><div class="c" style="left:223.8px;width:174.2px;"><span style="transform:translateY(4.41px) scaleX(.895) rotate(.03deg)">TRLW0756 - 301042728 Issue C0 DRYVAC DV 650, DV 800 Dry..</span></div><div class="c" style="left:398.0px;width:84.7px;"><span style="transform:translateY(4.41px) scaleX(.895) rotate(.03deg)">LanguageWire AB</span></div><div class="c" style="left:482.7px;width:76.5px;"><span style="transform:translateY(4.41px) scaleX(.895) rotate(.03deg)">16.09.2022 23:59</span></div><div class="c" style="left:559.2px;width:60.2px;"><span style="transform:translateY(4.41px) scaleX(.895) rotate(.03deg)">19.09.2022 00:00</span></div><div class="c" style="left:619.4px;width:152.9px;"><span style="transform:translateY(4.41px) scaleX(.895) rotate(.03deg)">Received, not allocated</span></div><div class="c r" style="left:790.1px;width:49.0px;"><span style="transform:translateY(4.41px) scaleX(.895) rotate(.03deg)">0</span></div></div>
<div class="row" style="top:459px;"><div class="c" style="left:0;width:17.1px;"><div class="abs" style="left:0;top:0.9px;"><svg class="abs" style="left:2.4px;top:1.1px;" width="14" height="9" viewBox="0 0 14 9"><rect x="1.1" y="0.9" width="7" height="4.7" fill="#f6f7fa" stroke="#8f99ae" stroke-width="0.7"/><path d="M2.4 2.5h4.4M2.4 3.8h4.4" stroke="#c9cedb" stroke-width="0.5"/></svg></div></div><div class="c" style="left:17.1px;width:206.7px;"><span style="transform:translateY(4.6px) scaleX(.895) rotate(.03deg)">JAN_239_03958</span></div><div class="c" style="left:223.8px;width:174.2px;"><span style="transform:translateY(4.6px) scaleX(.895) rotate(.03deg)">TRLW0766 - A35024880 Issue B - ES2 pumps translation</span></div><div class="c" style="left:398.0px;width:84.7px;"><span style="transform:translateY(4.6px) scaleX(.895) rotate(.03deg)">LanguageWire AB</span></div><div class="c" style="left:482.7px;width:76.5px;"><span style="transform:translateY(4.6px) scaleX(.895) rotate(.03deg)">20.09.2022 23:59</span></div><div class="c" style="left:559.2px;width:60.2px;"><span style="transform:translateY(4.6px) scaleX(.895) rotate(.03deg)">21.09.2022 00:00</span></div><div class="c" style="left:619.4px;width:152.9px;"><span style="transform:translateY(4.6px) scaleX(.895) rotate(.03deg)">Received, not allocated</span></div></div>
<div class="row" style="top:470px;"><div class="c" style="left:0;width:17.1px;"><div class="abs" style="left:0;top:0.09px;"><svg class="abs" style="left:2.4px;top:1.1px;" width="14" height="9" viewBox="0 0 14 9"><rect x="1.1" y="0.9" width="7" height="4.7" fill="#f6f7fa" stroke="#8f99ae" stroke-width="0.7"/><path d="M2.4 2.5h4.4M2.4 3.8h4.4" stroke="#c9cedb" stroke-width="0.5"/></svg></div></div><div class="c" style="left:17.1px;width:206.7px;"><span style="transform:translateY(3.79px) scaleX(.895) rotate(.03deg)">JAN_013_00032</span></div><div class="c" style="left:223.8px;width:174.2px;"><span style="transform:translateY(3.79px) scaleX(.895) rotate(.03deg)">Internal work (Epson and other clients)</span></div><div class="c" style="left:398.0px;width:84.7px;"><span style="transform:translateY(3.79px) scaleX(.895) rotate(.03deg)">Epson Japan</span></div><div class="c" style="left:482.7px;width:76.5px;"><span style="transform:translateY(3.79px) scaleX(.895) rotate(.03deg)">01.12.2022 23:59</span></div><div class="c" style="left:559.2px;width:60.2px;"><span style="transform:translateY(3.79px) scaleX(.895) rotate(.03deg)">30.12.2022 00:00</span></div><div class="c" style="left:619.4px;width:152.9px;"><span style="transform:translateY(3.79px) scaleX(.895) rotate(.03deg)">Deferred</span></div><div class="c" style="left:772.3px;width:17.8px;"><span style="transform:translateY(3.79px) scaleX(.895) rotate(.03deg)">За..</span></div><div class="c r" style="left:790.1px;width:49.0px;"><span style="transform:translateY(3.79px) scaleX(.895) rotate(.03deg)">3 680,4</span></div><div class="c" style="left:977.0px;width:33.5px;"><span style="transform:translateY(3.79px) scaleX(.895) rotate(.03deg)">Dita-xml</span></div></div>
<div class="abs" style="left:0;top:487px;width:1030px;height:14px;background:#ece6db;"></div>
<div class="abs" style="left:0.8px;top:487.5px;width:92.2px;height:10.5px;box-sizing:border-box;background:#b3cde8;border:0.6px solid #b4b8b0;"></div>
<div class="abs" style="left:2.3px;top:489.5px;width:6.4px;height:7.2px;background:#f2f5f9;border:0.5px solid #9aa8bc;box-sizing:border-box;"></div>
<div class="t" style="left:10.8px;top:491.2px;color:#334;-webkit-text-stroke:0;">Projects</div>
<div class="abs" style="left:0;top:499.6px;width:990.6px;height:1.4px;background:#f3efe8;border-top:0.5px solid #d2ccc0;border-right:0.5px solid #d2ccc0;box-sizing:border-box;"></div>
<div class="abs" style="left:993px;top:499.6px;width:16px;height:1.4px;background:#f3efe8;border:0.5px solid #d2ccc0;border-bottom:none;box-sizing:border-box;"></div>
<div class="abs" style="left:1012px;top:499.6px;width:18px;height:1.4px;background:#f3efe8;border:0.5px solid #d2ccc0;border-bottom:none;box-sizing:border-box;"></div>
</body></html>
